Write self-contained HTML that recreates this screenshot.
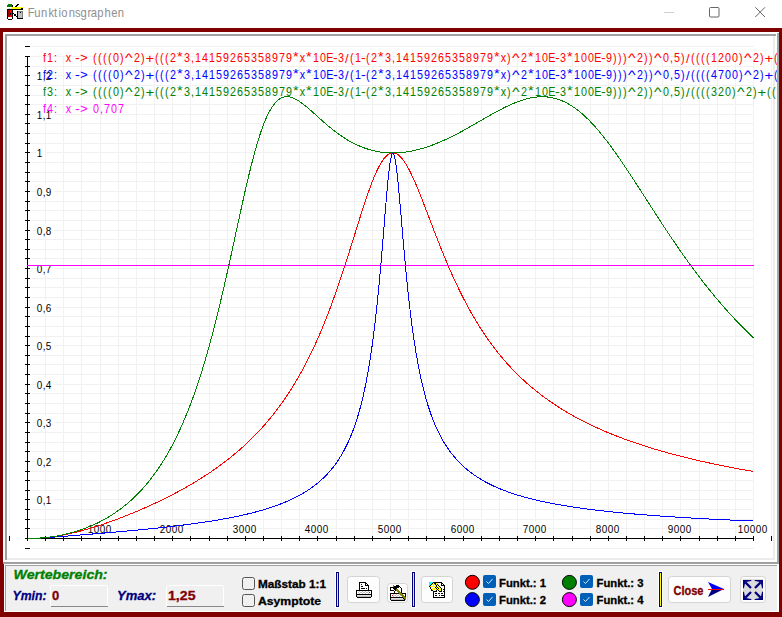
<!DOCTYPE html><html><head><meta charset="utf-8"><style>html,body{margin:0;padding:0;background:#fff;width:782px;height:617px;overflow:hidden}svg{display:block}text{font-family:"Liberation Sans",sans-serif}</style></head><body><svg width="782" height="617" viewBox="0 0 782 617"><rect x="0" y="0" width="782" height="28" fill="#fff"/><text x="30.85 38.19 45.64 53.99 60.04 64.94 68.19 76.41 83.43 89.41 97.20 100.75 108.19 116.19 123.64 130.97" y="16.9" font-size="12.5" fill="#8f8f8f" transform="scale(0.9,1)">Funktionsgraphen</text><g shape-rendering="crispEdges"><rect x="664" y="12" width="10" height="1" fill="#cfcfcf"/></g><rect x="709.5" y="7.5" width="9.5" height="9.5" rx="1" fill="none" stroke="#666" stroke-width="1"/><path d="M755.3 7.3 L765 17 M765 7.3 L755.3 17" stroke="#666" stroke-width="1" fill="none"/><g shape-rendering="crispEdges"><rect x="8" y="4" width="4" height="1" fill="#008000"/><rect x="17" y="4" width="2" height="1" fill="#000000"/><rect x="7" y="5" width="5" height="1" fill="#008000"/><rect x="12" y="5" width="1" height="1" fill="#000000"/><rect x="16" y="5" width="2" height="1" fill="#000000"/><rect x="7" y="6" width="5" height="1" fill="#008000"/><rect x="12" y="6" width="1" height="1" fill="#000000"/><rect x="15" y="6" width="2" height="1" fill="#000000"/><rect x="8" y="7" width="4" height="1" fill="#ffffff"/><rect x="12" y="7" width="11" height="1" fill="#ffff00"/><rect x="8" y="8" width="4" height="1" fill="#e0e0e0"/><rect x="12" y="8" width="9" height="1" fill="#ffff00"/><rect x="21" y="8" width="2" height="1" fill="#000000"/><rect x="7" y="9" width="16" height="1" fill="#000000"/><rect x="7" y="10" width="1" height="1" fill="#000000"/><rect x="8" y="10" width="2" height="1" fill="#a00000"/><rect x="10" y="10" width="2" height="1" fill="#ff0000"/><rect x="12" y="10" width="1" height="1" fill="#000000"/><rect x="7" y="11" width="1" height="1" fill="#000000"/><rect x="8" y="11" width="2" height="1" fill="#a00000"/><rect x="10" y="11" width="2" height="1" fill="#ff0000"/><rect x="12" y="11" width="1" height="1" fill="#000000"/><rect x="17" y="11" width="1" height="1" fill="#000000"/><rect x="18" y="11" width="5" height="1" fill="#808080"/><rect x="7" y="12" width="1" height="1" fill="#000000"/><rect x="8" y="12" width="2" height="1" fill="#a00000"/><rect x="10" y="12" width="2" height="1" fill="#ff0000"/><rect x="12" y="12" width="1" height="1" fill="#000000"/><rect x="17" y="12" width="1" height="1" fill="#000000"/><rect x="18" y="12" width="1" height="1" fill="#c0c0c0"/><rect x="19" y="12" width="1" height="1" fill="#00ffff"/><rect x="20" y="12" width="1" height="1" fill="#000000"/><rect x="21" y="12" width="1" height="1" fill="#00ffff"/><rect x="22" y="12" width="1" height="1" fill="#808080"/><rect x="7" y="13" width="1" height="1" fill="#000000"/><rect x="8" y="13" width="2" height="1" fill="#a00000"/><rect x="10" y="13" width="1" height="1" fill="#000000"/><rect x="11" y="13" width="1" height="1" fill="#ff0000"/><rect x="12" y="13" width="2" height="1" fill="#000000"/><rect x="17" y="13" width="1" height="1" fill="#000000"/><rect x="18" y="13" width="4" height="1" fill="#c0c0c0"/><rect x="22" y="13" width="1" height="1" fill="#808080"/><rect x="7" y="14" width="1" height="1" fill="#000000"/><rect x="8" y="14" width="2" height="1" fill="#a00000"/><rect x="10" y="14" width="1" height="1" fill="#000000"/><rect x="11" y="14" width="1" height="1" fill="#ff0000"/><rect x="12" y="14" width="1" height="1" fill="#000000"/><rect x="14" y="14" width="2" height="1" fill="#000000"/><rect x="17" y="14" width="1" height="1" fill="#000000"/><rect x="18" y="14" width="4" height="1" fill="#c0c0c0"/><rect x="22" y="14" width="1" height="1" fill="#808080"/><rect x="7" y="15" width="1" height="1" fill="#000000"/><rect x="8" y="15" width="2" height="1" fill="#a00000"/><rect x="10" y="15" width="2" height="1" fill="#ff0000"/><rect x="12" y="15" width="1" height="1" fill="#000000"/><rect x="14" y="15" width="2" height="1" fill="#000000"/><rect x="17" y="15" width="1" height="1" fill="#000000"/><rect x="18" y="15" width="4" height="1" fill="#c0c0c0"/><rect x="22" y="15" width="1" height="1" fill="#808080"/><rect x="7" y="16" width="1" height="1" fill="#000000"/><rect x="8" y="16" width="2" height="1" fill="#a00000"/><rect x="10" y="16" width="2" height="1" fill="#ff0000"/><rect x="12" y="16" width="1" height="1" fill="#000000"/><rect x="16" y="16" width="2" height="1" fill="#000000"/><rect x="18" y="16" width="4" height="1" fill="#c0c0c0"/><rect x="22" y="16" width="1" height="1" fill="#808080"/><rect x="7" y="17" width="1" height="1" fill="#000000"/><rect x="8" y="17" width="4" height="1" fill="#ffffff"/><rect x="12" y="17" width="1" height="1" fill="#000000"/><rect x="17" y="17" width="1" height="1" fill="#000000"/><rect x="18" y="17" width="4" height="1" fill="#c0c0c0"/><rect x="22" y="17" width="1" height="1" fill="#808080"/><rect x="7" y="18" width="1" height="1" fill="#000000"/><rect x="8" y="18" width="4" height="1" fill="#ffffff"/><rect x="12" y="18" width="1" height="1" fill="#000000"/><rect x="17" y="18" width="6" height="1" fill="#000000"/><rect x="8" y="19" width="4" height="1" fill="#000000"/></g><g shape-rendering="crispEdges"><rect x="0" y="28" width="782" height="589" fill="#800000"/><rect x="3" y="32" width="776" height="532" fill="#fff"/><rect x="5" y="34" width="771" height="2" fill="#a0a0a0"/><rect x="5" y="34" width="2" height="526" fill="#a0a0a0"/><rect x="777" y="33" width="2" height="531" fill="#a0a8a8"/><rect x="3" y="562" width="776" height="2" fill="#a0a0a0"/><rect x="773" y="36" width="2" height="524" fill="#ececec"/><rect x="7" y="558" width="768" height="2" fill="#ececec"/><rect x="4" y="564" width="775" height="48" fill="#fff"/><rect x="5" y="565" width="772" height="1" fill="#a0a0a0"/><rect x="5" y="565" width="1" height="46" fill="#a0a0a0"/><rect x="6" y="566" width="771" height="45" fill="#f0f0f0"/></g><g shape-rendering="crispEdges"><rect x="9" y="56" width="1" height="482" fill="#f1f1f1"/><rect x="27" y="56" width="1" height="482" fill="#f1f1f1"/><rect x="45" y="56" width="1" height="482" fill="#f1f1f1"/><rect x="63" y="56" width="1" height="482" fill="#f1f1f1"/><rect x="81" y="56" width="1" height="482" fill="#f1f1f1"/><rect x="100" y="56" width="1" height="482" fill="#f1f1f1"/><rect x="118" y="56" width="1" height="482" fill="#f1f1f1"/><rect x="136" y="56" width="1" height="482" fill="#f1f1f1"/><rect x="154" y="56" width="1" height="482" fill="#f1f1f1"/><rect x="172" y="56" width="1" height="482" fill="#f1f1f1"/><rect x="190" y="56" width="1" height="482" fill="#f1f1f1"/><rect x="209" y="56" width="1" height="482" fill="#f1f1f1"/><rect x="227" y="56" width="1" height="482" fill="#f1f1f1"/><rect x="245" y="56" width="1" height="482" fill="#f1f1f1"/><rect x="263" y="56" width="1" height="482" fill="#f1f1f1"/><rect x="281" y="56" width="1" height="482" fill="#f1f1f1"/><rect x="299" y="56" width="1" height="482" fill="#f1f1f1"/><rect x="317" y="56" width="1" height="482" fill="#f1f1f1"/><rect x="336" y="56" width="1" height="482" fill="#f1f1f1"/><rect x="354" y="56" width="1" height="482" fill="#f1f1f1"/><rect x="372" y="56" width="1" height="482" fill="#f1f1f1"/><rect x="390" y="56" width="1" height="482" fill="#f1f1f1"/><rect x="408" y="56" width="1" height="482" fill="#f1f1f1"/><rect x="426" y="56" width="1" height="482" fill="#f1f1f1"/><rect x="444" y="56" width="1" height="482" fill="#f1f1f1"/><rect x="463" y="56" width="1" height="482" fill="#f1f1f1"/><rect x="481" y="56" width="1" height="482" fill="#f1f1f1"/><rect x="499" y="56" width="1" height="482" fill="#f1f1f1"/><rect x="517" y="56" width="1" height="482" fill="#f1f1f1"/><rect x="535" y="56" width="1" height="482" fill="#f1f1f1"/><rect x="553" y="56" width="1" height="482" fill="#f1f1f1"/><rect x="572" y="56" width="1" height="482" fill="#f1f1f1"/><rect x="590" y="56" width="1" height="482" fill="#f1f1f1"/><rect x="608" y="56" width="1" height="482" fill="#f1f1f1"/><rect x="626" y="56" width="1" height="482" fill="#f1f1f1"/><rect x="644" y="56" width="1" height="482" fill="#f1f1f1"/><rect x="662" y="56" width="1" height="482" fill="#f1f1f1"/><rect x="680" y="56" width="1" height="482" fill="#f1f1f1"/><rect x="699" y="56" width="1" height="482" fill="#f1f1f1"/><rect x="717" y="56" width="1" height="482" fill="#f1f1f1"/><rect x="735" y="56" width="1" height="482" fill="#f1f1f1"/><rect x="753" y="56" width="1" height="482" fill="#f1f1f1"/><rect x="771" y="56" width="1" height="482" fill="#f1f1f1"/><rect x="31" y="548" width="723" height="1" fill="#f1f1f1"/><rect x="31" y="538" width="723" height="1" fill="#f1f1f1"/><rect x="31" y="528" width="723" height="1" fill="#f1f1f1"/><rect x="31" y="519" width="723" height="1" fill="#f1f1f1"/><rect x="31" y="509" width="723" height="1" fill="#f1f1f1"/><rect x="31" y="499" width="723" height="1" fill="#f1f1f1"/><rect x="31" y="490" width="723" height="1" fill="#f1f1f1"/><rect x="31" y="480" width="723" height="1" fill="#f1f1f1"/><rect x="31" y="471" width="723" height="1" fill="#f1f1f1"/><rect x="31" y="461" width="723" height="1" fill="#f1f1f1"/><rect x="31" y="451" width="723" height="1" fill="#f1f1f1"/><rect x="31" y="442" width="723" height="1" fill="#f1f1f1"/><rect x="31" y="432" width="723" height="1" fill="#f1f1f1"/><rect x="31" y="422" width="723" height="1" fill="#f1f1f1"/><rect x="31" y="413" width="723" height="1" fill="#f1f1f1"/><rect x="31" y="403" width="723" height="1" fill="#f1f1f1"/><rect x="31" y="393" width="723" height="1" fill="#f1f1f1"/><rect x="31" y="384" width="723" height="1" fill="#f1f1f1"/><rect x="31" y="374" width="723" height="1" fill="#f1f1f1"/><rect x="31" y="364" width="723" height="1" fill="#f1f1f1"/><rect x="31" y="355" width="723" height="1" fill="#f1f1f1"/><rect x="31" y="345" width="723" height="1" fill="#f1f1f1"/><rect x="31" y="336" width="723" height="1" fill="#f1f1f1"/><rect x="31" y="326" width="723" height="1" fill="#f1f1f1"/><rect x="31" y="316" width="723" height="1" fill="#f1f1f1"/><rect x="31" y="307" width="723" height="1" fill="#f1f1f1"/><rect x="31" y="297" width="723" height="1" fill="#f1f1f1"/><rect x="31" y="287" width="723" height="1" fill="#f1f1f1"/><rect x="31" y="278" width="723" height="1" fill="#f1f1f1"/><rect x="31" y="268" width="723" height="1" fill="#f1f1f1"/><rect x="31" y="258" width="723" height="1" fill="#f1f1f1"/><rect x="31" y="249" width="723" height="1" fill="#f1f1f1"/><rect x="31" y="239" width="723" height="1" fill="#f1f1f1"/><rect x="31" y="230" width="723" height="1" fill="#f1f1f1"/><rect x="31" y="220" width="723" height="1" fill="#f1f1f1"/><rect x="31" y="210" width="723" height="1" fill="#f1f1f1"/><rect x="31" y="201" width="723" height="1" fill="#f1f1f1"/><rect x="31" y="191" width="723" height="1" fill="#f1f1f1"/><rect x="31" y="181" width="723" height="1" fill="#f1f1f1"/><rect x="31" y="172" width="723" height="1" fill="#f1f1f1"/><rect x="31" y="162" width="723" height="1" fill="#f1f1f1"/><rect x="31" y="152" width="723" height="1" fill="#f1f1f1"/><rect x="31" y="143" width="723" height="1" fill="#f1f1f1"/><rect x="31" y="133" width="723" height="1" fill="#f1f1f1"/><rect x="31" y="123" width="723" height="1" fill="#f1f1f1"/><rect x="31" y="114" width="723" height="1" fill="#f1f1f1"/><rect x="31" y="104" width="723" height="1" fill="#f1f1f1"/><rect x="31" y="95" width="723" height="1" fill="#f1f1f1"/><rect x="31" y="85" width="723" height="1" fill="#f1f1f1"/><rect x="31" y="75" width="723" height="1" fill="#f1f1f1"/><rect x="31" y="66" width="723" height="1" fill="#f1f1f1"/><rect x="31" y="56" width="723" height="1" fill="#f1f1f1"/><rect x="31" y="46" width="723" height="1" fill="#f1f1f1"/><rect x="27" y="56" width="1" height="483" fill="#000"/><rect x="27" y="538" width="727" height="1" fill="#000"/><rect x="25" y="548" width="5" height="1" fill="#000"/><rect x="25" y="538" width="5" height="1" fill="#000"/><rect x="25" y="528" width="5" height="1" fill="#000"/><rect x="25" y="519" width="5" height="1" fill="#000"/><rect x="25" y="509" width="5" height="1" fill="#000"/><rect x="25" y="499" width="5" height="1" fill="#000"/><rect x="25" y="490" width="5" height="1" fill="#000"/><rect x="25" y="480" width="5" height="1" fill="#000"/><rect x="25" y="471" width="5" height="1" fill="#000"/><rect x="25" y="461" width="5" height="1" fill="#000"/><rect x="25" y="451" width="5" height="1" fill="#000"/><rect x="25" y="442" width="5" height="1" fill="#000"/><rect x="25" y="432" width="5" height="1" fill="#000"/><rect x="25" y="422" width="5" height="1" fill="#000"/><rect x="25" y="413" width="5" height="1" fill="#000"/><rect x="25" y="403" width="5" height="1" fill="#000"/><rect x="25" y="393" width="5" height="1" fill="#000"/><rect x="25" y="384" width="5" height="1" fill="#000"/><rect x="25" y="374" width="5" height="1" fill="#000"/><rect x="25" y="364" width="5" height="1" fill="#000"/><rect x="25" y="355" width="5" height="1" fill="#000"/><rect x="25" y="345" width="5" height="1" fill="#000"/><rect x="25" y="336" width="5" height="1" fill="#000"/><rect x="25" y="326" width="5" height="1" fill="#000"/><rect x="25" y="316" width="5" height="1" fill="#000"/><rect x="25" y="307" width="5" height="1" fill="#000"/><rect x="25" y="297" width="5" height="1" fill="#000"/><rect x="25" y="287" width="5" height="1" fill="#000"/><rect x="25" y="278" width="5" height="1" fill="#000"/><rect x="25" y="268" width="5" height="1" fill="#000"/><rect x="25" y="258" width="5" height="1" fill="#000"/><rect x="25" y="249" width="5" height="1" fill="#000"/><rect x="25" y="239" width="5" height="1" fill="#000"/><rect x="25" y="230" width="5" height="1" fill="#000"/><rect x="25" y="220" width="5" height="1" fill="#000"/><rect x="25" y="210" width="5" height="1" fill="#000"/><rect x="25" y="201" width="5" height="1" fill="#000"/><rect x="25" y="191" width="5" height="1" fill="#000"/><rect x="25" y="181" width="5" height="1" fill="#000"/><rect x="25" y="172" width="5" height="1" fill="#000"/><rect x="25" y="162" width="5" height="1" fill="#000"/><rect x="25" y="152" width="5" height="1" fill="#000"/><rect x="25" y="143" width="5" height="1" fill="#000"/><rect x="25" y="133" width="5" height="1" fill="#000"/><rect x="25" y="123" width="5" height="1" fill="#000"/><rect x="25" y="114" width="5" height="1" fill="#000"/><rect x="25" y="104" width="5" height="1" fill="#000"/><rect x="25" y="95" width="5" height="1" fill="#000"/><rect x="25" y="85" width="5" height="1" fill="#000"/><rect x="25" y="75" width="5" height="1" fill="#000"/><rect x="25" y="66" width="5" height="1" fill="#000"/><rect x="25" y="56" width="5" height="1" fill="#000"/><rect x="25" y="46" width="5" height="1" fill="#000"/><rect x="9" y="536" width="1" height="5" fill="#000"/><rect x="27" y="536" width="1" height="5" fill="#000"/><rect x="45" y="536" width="1" height="5" fill="#000"/><rect x="63" y="536" width="1" height="5" fill="#000"/><rect x="81" y="536" width="1" height="5" fill="#000"/><rect x="100" y="536" width="1" height="5" fill="#000"/><rect x="118" y="536" width="1" height="5" fill="#000"/><rect x="136" y="536" width="1" height="5" fill="#000"/><rect x="154" y="536" width="1" height="5" fill="#000"/><rect x="172" y="536" width="1" height="5" fill="#000"/><rect x="190" y="536" width="1" height="5" fill="#000"/><rect x="209" y="536" width="1" height="5" fill="#000"/><rect x="227" y="536" width="1" height="5" fill="#000"/><rect x="245" y="536" width="1" height="5" fill="#000"/><rect x="263" y="536" width="1" height="5" fill="#000"/><rect x="281" y="536" width="1" height="5" fill="#000"/><rect x="299" y="536" width="1" height="5" fill="#000"/><rect x="317" y="536" width="1" height="5" fill="#000"/><rect x="336" y="536" width="1" height="5" fill="#000"/><rect x="354" y="536" width="1" height="5" fill="#000"/><rect x="372" y="536" width="1" height="5" fill="#000"/><rect x="390" y="536" width="1" height="5" fill="#000"/><rect x="408" y="536" width="1" height="5" fill="#000"/><rect x="426" y="536" width="1" height="5" fill="#000"/><rect x="444" y="536" width="1" height="5" fill="#000"/><rect x="463" y="536" width="1" height="5" fill="#000"/><rect x="481" y="536" width="1" height="5" fill="#000"/><rect x="499" y="536" width="1" height="5" fill="#000"/><rect x="517" y="536" width="1" height="5" fill="#000"/><rect x="535" y="536" width="1" height="5" fill="#000"/><rect x="553" y="536" width="1" height="5" fill="#000"/><rect x="572" y="536" width="1" height="5" fill="#000"/><rect x="590" y="536" width="1" height="5" fill="#000"/><rect x="608" y="536" width="1" height="5" fill="#000"/><rect x="626" y="536" width="1" height="5" fill="#000"/><rect x="644" y="536" width="1" height="5" fill="#000"/><rect x="662" y="536" width="1" height="5" fill="#000"/><rect x="680" y="536" width="1" height="5" fill="#000"/><rect x="699" y="536" width="1" height="5" fill="#000"/><rect x="717" y="536" width="1" height="5" fill="#000"/><rect x="735" y="536" width="1" height="5" fill="#000"/><rect x="753" y="536" width="1" height="5" fill="#000"/><rect x="771" y="536" width="1" height="5" fill="#000"/></g><rect x="36" y="493" width="18" height="13" fill="#fff"/><text x="41.86 48.54 52.09" y="504.0" font-size="11.3" fill="#000" transform="scale(0.88,1)" >0,1</text><rect x="36" y="455" width="18" height="13" fill="#fff"/><text x="41.86 48.54 52.09" y="466.0" font-size="11.3" fill="#000" transform="scale(0.88,1)" >0,2</text><rect x="36" y="416" width="18" height="13" fill="#fff"/><text x="41.86 48.54 52.09" y="427.0" font-size="11.3" fill="#000" transform="scale(0.88,1)" >0,3</text><rect x="36" y="378" width="18" height="13" fill="#fff"/><text x="41.86 48.54 52.09" y="389.0" font-size="11.3" fill="#000" transform="scale(0.88,1)" >0,4</text><rect x="36" y="339" width="18" height="13" fill="#fff"/><text x="41.86 48.54 52.09" y="350.0" font-size="11.3" fill="#000" transform="scale(0.88,1)" >0,5</text><rect x="36" y="301" width="18" height="13" fill="#fff"/><text x="41.86 48.54 52.09" y="312.0" font-size="11.3" fill="#000" transform="scale(0.88,1)" >0,6</text><rect x="36" y="262" width="18" height="13" fill="#fff"/><text x="41.86 48.54 52.09" y="273.0" font-size="11.3" fill="#000" transform="scale(0.88,1)" >0,7</text><rect x="36" y="224" width="18" height="13" fill="#fff"/><text x="41.86 48.54 52.09" y="235.0" font-size="11.3" fill="#000" transform="scale(0.88,1)" >0,8</text><rect x="36" y="185" width="18" height="13" fill="#fff"/><text x="41.86 48.54 52.09" y="196.0" font-size="11.3" fill="#000" transform="scale(0.88,1)" >0,9</text><rect x="36" y="146" width="9" height="13" fill="#fff"/><text x="41.86" y="157.0" font-size="11.3" fill="#000" transform="scale(0.88,1)" >1</text><rect x="36" y="108" width="18" height="13" fill="#fff"/><text x="41.86 48.54 52.09" y="119.0" font-size="11.3" fill="#000" transform="scale(0.88,1)" >1,1</text><rect x="36" y="69" width="18" height="13" fill="#fff"/><text x="41.86 48.54 52.09" y="80.0" font-size="11.3" fill="#000" transform="scale(0.88,1)" >1,2</text><rect x="87" y="522" width="26" height="13" fill="#fff"/><text x="99.70 106.52 113.34 120.15" y="533.0" font-size="11.3" fill="#000" transform="scale(0.88,1)" >1000</text><rect x="159" y="522" width="26" height="13" fill="#fff"/><text x="181.52 188.34 195.15 201.97" y="533.0" font-size="11.3" fill="#000" transform="scale(0.88,1)" >2000</text><rect x="232" y="522" width="26" height="13" fill="#fff"/><text x="264.47 271.29 278.11 284.93" y="533.0" font-size="11.3" fill="#000" transform="scale(0.88,1)" >3000</text><rect x="304" y="522" width="26" height="13" fill="#fff"/><text x="346.29 353.11 359.93 366.74" y="533.0" font-size="11.3" fill="#000" transform="scale(0.88,1)" >4000</text><rect x="377" y="522" width="26" height="13" fill="#fff"/><text x="429.24 436.06 442.88 449.70" y="533.0" font-size="11.3" fill="#000" transform="scale(0.88,1)" >5000</text><rect x="450" y="522" width="26" height="13" fill="#fff"/><text x="512.20 519.02 525.84 532.65" y="533.0" font-size="11.3" fill="#000" transform="scale(0.88,1)" >6000</text><rect x="522" y="522" width="26" height="13" fill="#fff"/><text x="594.02 600.84 607.65 614.47" y="533.0" font-size="11.3" fill="#000" transform="scale(0.88,1)" >7000</text><rect x="595" y="522" width="26" height="13" fill="#fff"/><text x="676.97 683.79 690.61 697.43" y="533.0" font-size="11.3" fill="#000" transform="scale(0.88,1)" >8000</text><rect x="667" y="522" width="26" height="13" fill="#fff"/><text x="758.79 765.61 772.43 779.24" y="533.0" font-size="11.3" fill="#000" transform="scale(0.88,1)" >9000</text><rect x="737" y="522" width="32" height="13" fill="#fff"/><text x="838.34 845.15 851.97 858.79 865.61" y="533.0" font-size="11.3" fill="#000" transform="scale(0.88,1)" >10000</text><defs><clipPath id="cp"><rect x="7" y="36" width="770" height="526"/></clipPath></defs><g clip-path="url(#cp)"><text x="49.89 54.55 62.68 76.41 108.27 114.08 119.90 125.71 131.29 139.66 155.71 164.08 180.36 186.17 191.99 197.57 213.85 221.98 226.64 234.78 242.92 251.06 259.20 267.34 275.48 283.62 291.76 299.90 308.04 316.18 324.32 332.45 348.50 363.85 371.99 379.44 392.92 407.10 412.69 425.71 431.29 447.57 455.71 460.36 468.50 476.64 484.78 492.92 501.06 509.20 517.34 525.48 533.62 541.76 549.90 558.04 566.18 582.22 589.66 605.71 621.99 630.13 637.58 651.06 667.34 675.48 683.62 691.06 704.55 712.92 718.73 724.55 740.59 748.97 754.78 770.83 778.96 783.62 791.99 803.62 809.43 815.24 821.06 826.64 834.78 842.92 851.06 859.43 875.48 883.85 900.13 905.94 911.76 917.57 923.15 939.43" y="62.0" font-size="12.5" fill="#ff0000" transform="scale(0.86,1)" >f1:x((((0)2)(((23,14159265358979x10E3(1(23,14159265358979x)210E3100E9)))2))0,5)((((1200)2)((((23</text><text x="65.22 289.57 313.92 482.61 522.61" y="62.0" font-size="12.5" fill="#ff0000" transform="scale(1.15,1)" >-----</text><text x="76.25" y="62.0" font-size="12.5" fill="#ff0000" transform="scale(1.05,1)" >&gt;</text><text x="96.22 393.91 483.14 503.14 572.38" y="62.0" font-size="12.5" fill="#ff0000" transform="scale(1.3,1)" >^^^^^</text><text x="126.55 664.81" y="63.0" font-size="13.0" fill="#ff0000" transform="scale(1.15,1)" >++</text><text x="147.58 244.25 255.08 315.08 411.75 440.08 472.58 667.58" y="61.1" font-size="12.0" fill="#ff0000" transform="scale(1.2,1)" >********</text><text x="363.28 722.23" y="62.8" font-size="13.5" fill="#ff0000" transform="scale(0.95,1)" >//</text><text x="49.89 54.55 62.68 76.41 108.27 114.08 119.90 125.71 131.29 139.66 155.71 164.08 180.36 186.17 191.99 197.57 213.85 221.98 226.64 234.78 242.92 251.06 259.20 267.34 275.48 283.62 291.76 299.90 308.04 316.18 324.32 332.45 348.50 363.85 371.99 379.44 392.92 407.10 412.69 425.71 431.29 447.57 455.71 460.36 468.50 476.64 484.78 492.92 501.06 509.20 517.34 525.48 533.62 541.76 549.90 558.04 566.18 582.22 589.66 605.71 621.99 630.13 637.58 651.06 667.34 675.48 683.62 691.06 704.55 712.92 718.73 724.55 740.59 748.97 754.78 770.83 778.96 783.62 791.99 803.62 809.43 815.24 821.06 826.64 834.78 842.92 851.06 859.43 875.48 883.85 900.13 905.94 911.76 917.57 923.15 939.43" y="79.0" font-size="12.5" fill="#0000ff" transform="scale(0.86,1)" >f2:x((((0)2)(((23,14159265358979x10E3(1(23,14159265358979x)210E3100E9)))2))0,5)((((4700)2)((((23</text><text x="65.22 289.57 313.92 482.61 522.61" y="79.0" font-size="12.5" fill="#0000ff" transform="scale(1.15,1)" >-----</text><text x="76.25" y="79.0" font-size="12.5" fill="#0000ff" transform="scale(1.05,1)" >&gt;</text><text x="96.22 393.91 483.14 503.14 572.38" y="79.0" font-size="12.5" fill="#0000ff" transform="scale(1.3,1)" >^^^^^</text><text x="126.55 664.81" y="80.0" font-size="13.0" fill="#0000ff" transform="scale(1.15,1)" >++</text><text x="147.58 244.25 255.08 315.08 411.75 440.08 472.58 667.58" y="78.1" font-size="12.0" fill="#0000ff" transform="scale(1.2,1)" >********</text><text x="363.28 722.23" y="79.8" font-size="13.5" fill="#0000ff" transform="scale(0.95,1)" >//</text><text x="49.89 54.55 62.68 76.41 108.27 114.08 119.90 125.71 131.29 139.66 155.71 164.08 180.36 186.17 191.99 197.57 213.85 221.98 226.64 234.78 242.92 251.06 259.20 267.34 275.48 283.62 291.76 299.90 308.04 316.18 324.32 332.45 348.50 363.85 371.99 379.44 392.92 407.10 412.69 425.71 431.29 447.57 455.71 460.36 468.50 476.64 484.78 492.92 501.06 509.20 517.34 525.48 533.62 541.76 549.90 558.04 566.18 582.22 589.66 605.71 621.99 630.13 637.58 651.06 667.34 675.48 683.62 691.06 704.55 712.92 718.73 724.55 740.59 748.97 754.78 770.83 778.96 783.62 791.99 803.62 809.43 815.24 821.06 826.64 834.78 842.92 851.29 867.34 875.71 891.99 897.80 903.62 909.43 915.01 931.29" y="96.0" font-size="12.5" fill="#008000" transform="scale(0.86,1)" >f3:x((((0)2)(((23,14159265358979x10E3(1(23,14159265358979x)210E3100E9)))2))0,5)((((320)2)((((23</text><text x="65.22 289.57 313.92 482.61 522.61" y="96.0" font-size="12.5" fill="#008000" transform="scale(1.15,1)" >-----</text><text x="76.25" y="96.0" font-size="12.5" fill="#008000" transform="scale(1.05,1)" >&gt;</text><text x="96.22 393.91 483.14 503.14 566.99" y="96.0" font-size="12.5" fill="#008000" transform="scale(1.3,1)" >^^^^^</text><text x="126.55 658.73" y="97.0" font-size="13.0" fill="#008000" transform="scale(1.15,1)" >++</text><text x="147.58 244.25 255.08 315.08 411.75 440.08 472.58 661.75" y="95.1" font-size="12.0" fill="#008000" transform="scale(1.2,1)" >********</text><text x="363.28 722.23" y="96.8" font-size="13.5" fill="#008000" transform="scale(0.95,1)" >//</text><text x="49.89 54.55 62.68 76.41 108.04 116.17 120.83 128.97 137.11" y="113.0" font-size="12.5" fill="#ff00ff" transform="scale(0.86,1)" >f4:x0,707</text><text x="65.22" y="113.0" font-size="12.5" fill="#ff00ff" transform="scale(1.15,1)" >-</text><text x="76.25" y="113.0" font-size="12.5" fill="#ff00ff" transform="scale(1.05,1)" >&gt;</text></g><polyline points="27.5,538.50 28.5,538.50 29.5,538.49 30.5,538.47 31.5,538.45 32.5,538.43 33.5,538.40 34.5,538.36 35.5,538.32 36.5,538.27 37.5,538.21 38.5,538.15 39.5,538.09 40.5,538.01 41.5,537.94 42.5,537.85 43.5,537.77 44.5,537.67 45.5,537.57 46.5,537.47 47.5,537.36 48.5,537.24 49.5,537.12 50.5,537.00 51.5,536.87 52.5,536.73 53.5,536.59 54.5,536.44 55.5,536.29 56.5,536.13 57.5,535.97 58.5,535.80 59.5,535.63 60.5,535.46 61.5,535.27 62.5,535.09 63.5,534.90 64.5,534.70 65.5,534.50 66.5,534.30 67.5,534.09 68.5,533.88 69.5,533.66 70.5,533.44 71.5,533.21 72.5,532.98 73.5,532.75 74.5,532.51 75.5,532.27 76.5,532.02 77.5,531.77 78.5,531.52 79.5,531.26 80.5,531.00 81.5,530.73 82.5,530.46 83.5,530.19 84.5,529.91 85.5,529.63 86.5,529.35 87.5,529.06 88.5,528.77 89.5,528.48 90.5,528.18 91.5,527.88 92.5,527.58 93.5,527.27 94.5,526.96 95.5,526.65 96.5,526.33 97.5,526.01 98.5,525.69 99.5,525.37 100.5,525.04 101.5,524.71 102.5,524.38 103.5,524.04 104.5,523.70 105.5,523.36 106.5,523.01 107.5,522.67 108.5,522.32 109.5,521.96 110.5,521.61 111.5,521.25 112.5,520.89 113.5,520.52 114.5,520.16 115.5,519.79 116.5,519.42 117.5,519.05 118.5,518.67 119.5,518.29 120.5,517.91 121.5,517.53 122.5,517.14 123.5,516.75 124.5,516.36 125.5,515.97 126.5,515.57 127.5,515.17 128.5,514.77 129.5,514.37 130.5,513.96 131.5,513.55 132.5,513.14 133.5,512.73 134.5,512.32 135.5,511.90 136.5,511.48 137.5,511.06 138.5,510.63 139.5,510.20 140.5,509.77 141.5,509.34 142.5,508.90 143.5,508.47 144.5,508.03 145.5,507.58 146.5,507.14 147.5,506.69 148.5,506.24 149.5,505.79 150.5,505.33 151.5,504.88 152.5,504.42 153.5,503.95 154.5,503.49 155.5,503.02 156.5,502.55 157.5,502.07 158.5,501.60 159.5,501.12 160.5,500.63 161.5,500.15 162.5,499.66 163.5,499.17 164.5,498.68 165.5,498.18 166.5,497.68 167.5,497.18 168.5,496.67 169.5,496.16 170.5,495.65 171.5,495.14 172.5,494.62 173.5,494.10 174.5,493.57 175.5,493.04 176.5,492.51 177.5,491.98 178.5,491.44 179.5,490.90 180.5,490.35 181.5,489.80 182.5,489.25 183.5,488.70 184.5,488.14 185.5,487.57 186.5,487.01 187.5,486.44 188.5,485.86 189.5,485.28 190.5,484.70 191.5,484.11 192.5,483.52 193.5,482.93 194.5,482.33 195.5,481.73 196.5,481.12 197.5,480.51 198.5,479.89 199.5,479.27 200.5,478.65 201.5,478.02 202.5,477.38 203.5,476.74 204.5,476.10 205.5,475.45 206.5,474.80 207.5,474.14 208.5,473.47 209.5,472.80 210.5,472.13 211.5,471.45 212.5,470.76 213.5,470.07 214.5,469.37 215.5,468.67 216.5,467.96 217.5,467.25 218.5,466.53 219.5,465.80 220.5,465.07 221.5,464.33 222.5,463.59 223.5,462.84 224.5,462.08 225.5,461.31 226.5,460.54 227.5,459.76 228.5,458.98 229.5,458.19 230.5,457.39 231.5,456.58 232.5,455.77 233.5,454.94 234.5,454.11 235.5,453.28 236.5,452.43 237.5,451.58 238.5,450.72 239.5,449.85 240.5,448.97 241.5,448.08 242.5,447.19 243.5,446.28 244.5,445.37 245.5,444.44 246.5,443.51 247.5,442.57 248.5,441.62 249.5,440.66 250.5,439.68 251.5,438.70 252.5,437.71 253.5,436.71 254.5,435.69 255.5,434.67 256.5,433.63 257.5,432.59 258.5,431.53 259.5,430.46 260.5,429.38 261.5,428.28 262.5,427.18 263.5,426.06 264.5,424.93 265.5,423.78 266.5,422.62 267.5,421.45 268.5,420.27 269.5,419.07 270.5,417.85 271.5,416.63 272.5,415.38 273.5,414.13 274.5,412.85 275.5,411.57 276.5,410.26 277.5,408.94 278.5,407.61 279.5,406.25 280.5,404.88 281.5,403.50 282.5,402.09 283.5,400.67 284.5,399.23 285.5,397.77 286.5,396.29 287.5,394.80 288.5,393.28 289.5,391.74 290.5,390.19 291.5,388.61 292.5,387.01 293.5,385.40 294.5,383.75 295.5,382.09 296.5,380.41 297.5,378.70 298.5,376.97 299.5,375.22 300.5,373.44 301.5,371.64 302.5,369.81 303.5,367.96 304.5,366.08 305.5,364.18 306.5,362.25 307.5,360.30 308.5,358.31 309.5,356.30 310.5,354.27 311.5,352.20 312.5,350.11 313.5,347.99 314.5,345.83 315.5,343.65 316.5,341.44 317.5,339.20 318.5,336.93 319.5,334.63 320.5,332.29 321.5,329.93 322.5,327.53 323.5,325.10 324.5,322.64 325.5,320.15 326.5,317.63 327.5,315.07 328.5,312.48 329.5,309.86 330.5,307.20 331.5,304.52 332.5,301.80 333.5,299.05 334.5,296.27 335.5,293.45 336.5,290.61 337.5,287.73 338.5,284.83 339.5,281.89 340.5,278.93 341.5,275.94 342.5,272.92 343.5,269.88 344.5,266.82 345.5,263.73 346.5,260.61 347.5,257.48 348.5,254.33 349.5,251.17 350.5,247.99 351.5,244.80 352.5,241.60 353.5,238.39 354.5,235.18 355.5,231.97 356.5,228.76 357.5,225.56 358.5,222.37 359.5,219.18 360.5,216.02 361.5,212.88 362.5,209.76 363.5,206.67 364.5,203.62 365.5,200.61 366.5,197.64 367.5,194.73 368.5,191.87 369.5,189.06 370.5,186.33 371.5,183.67 372.5,181.08 373.5,178.57 374.5,176.16 375.5,173.84 376.5,171.61 377.5,169.49 378.5,167.48 379.5,165.59 380.5,163.81 381.5,162.15 382.5,160.62 383.5,159.23 384.5,157.96 385.5,156.83 386.5,155.84 387.5,155.00 388.5,154.29 389.5,153.73 390.5,153.31 391.5,153.04 392.5,152.91 393.5,152.93 394.5,153.08 395.5,153.38 396.5,153.82 397.5,154.39 398.5,155.10 399.5,155.94 400.5,156.90 401.5,157.99 402.5,159.19 403.5,160.51 404.5,161.93 405.5,163.47 406.5,165.10 407.5,166.82 408.5,168.64 409.5,170.54 410.5,172.51 411.5,174.56 412.5,176.69 413.5,178.87 414.5,181.11 415.5,183.41 416.5,185.76 417.5,188.15 418.5,190.58 419.5,193.04 420.5,195.54 421.5,198.06 422.5,200.61 423.5,203.18 424.5,205.76 425.5,208.36 426.5,210.97 427.5,213.58 428.5,216.20 429.5,218.82 430.5,221.44 431.5,224.06 432.5,226.67 433.5,229.27 434.5,231.86 435.5,234.44 436.5,237.01 437.5,239.57 438.5,242.11 439.5,244.63 440.5,247.14 441.5,249.62 442.5,252.09 443.5,254.53 444.5,256.96 445.5,259.36 446.5,261.74 447.5,264.10 448.5,266.43 449.5,268.74 450.5,271.02 451.5,273.28 452.5,275.52 453.5,277.73 454.5,279.91 455.5,282.07 456.5,284.21 457.5,286.32 458.5,288.40 459.5,290.46 460.5,292.50 461.5,294.51 462.5,296.49 463.5,298.45 464.5,300.39 465.5,302.30 466.5,304.19 467.5,306.05 468.5,307.89 469.5,309.70 470.5,311.50 471.5,313.27 472.5,315.01 473.5,316.74 474.5,318.44 475.5,320.12 476.5,321.78 477.5,323.41 478.5,325.03 479.5,326.62 480.5,328.20 481.5,329.75 482.5,331.28 483.5,332.80 484.5,334.29 485.5,335.77 486.5,337.22 487.5,338.66 488.5,340.08 489.5,341.48 490.5,342.86 491.5,344.23 492.5,345.58 493.5,346.91 494.5,348.22 495.5,349.52 496.5,350.80 497.5,352.07 498.5,353.32 499.5,354.55 500.5,355.77 501.5,356.98 502.5,358.17 503.5,359.34 504.5,360.50 505.5,361.65 506.5,362.78 507.5,363.90 508.5,365.01 509.5,366.10 510.5,367.18 511.5,368.24 512.5,369.30 513.5,370.34 514.5,371.37 515.5,372.39 516.5,373.39 517.5,374.39 518.5,375.37 519.5,376.34 520.5,377.30 521.5,378.25 522.5,379.19 523.5,380.11 524.5,381.03 525.5,381.94 526.5,382.84 527.5,383.72 528.5,384.60 529.5,385.47 530.5,386.32 531.5,387.17 532.5,388.01 533.5,388.84 534.5,389.67 535.5,390.48 536.5,391.28 537.5,392.08 538.5,392.86 539.5,393.64 540.5,394.41 541.5,395.18 542.5,395.93 543.5,396.68 544.5,397.42 545.5,398.15 546.5,398.88 547.5,399.59 548.5,400.30 549.5,401.00 550.5,401.70 551.5,402.39 552.5,403.07 553.5,403.75 554.5,404.42 555.5,405.08 556.5,405.73 557.5,406.38 558.5,407.03 559.5,407.66 560.5,408.29 561.5,408.92 562.5,409.54 563.5,410.15 564.5,410.76 565.5,411.36 566.5,411.96 567.5,412.55 568.5,413.13 569.5,413.71 570.5,414.29 571.5,414.86 572.5,415.42 573.5,415.98 574.5,416.53 575.5,417.08 576.5,417.63 577.5,418.16 578.5,418.70 579.5,419.23 580.5,419.75 581.5,420.28 582.5,420.79 583.5,421.30 584.5,421.81 585.5,422.31 586.5,422.81 587.5,423.31 588.5,423.80 589.5,424.28 590.5,424.77 591.5,425.24 592.5,425.72 593.5,426.19 594.5,426.66 595.5,427.12 596.5,427.58 597.5,428.03 598.5,428.48 599.5,428.93 600.5,429.38 601.5,429.82 602.5,430.25 603.5,430.69 604.5,431.12 605.5,431.54 606.5,431.97 607.5,432.39 608.5,432.80 609.5,433.22 610.5,433.63 611.5,434.04 612.5,434.44 613.5,434.84 614.5,435.24 615.5,435.64 616.5,436.03 617.5,436.42 618.5,436.80 619.5,437.19 620.5,437.57 621.5,437.95 622.5,438.32 623.5,438.69 624.5,439.06 625.5,439.43 626.5,439.79 627.5,440.16 628.5,440.51 629.5,440.87 630.5,441.22 631.5,441.58 632.5,441.93 633.5,442.27 634.5,442.62 635.5,442.96 636.5,443.30 637.5,443.63 638.5,443.97 639.5,444.30 640.5,444.63 641.5,444.96 642.5,445.28 643.5,445.61 644.5,445.93 645.5,446.25 646.5,446.57 647.5,446.88 648.5,447.19 649.5,447.50 650.5,447.81 651.5,448.12 652.5,448.42 653.5,448.73 654.5,449.03 655.5,449.32 656.5,449.62 657.5,449.92 658.5,450.21 659.5,450.50 660.5,450.79 661.5,451.08 662.5,451.36 663.5,451.65 664.5,451.93 665.5,452.21 666.5,452.49 667.5,452.76 668.5,453.04 669.5,453.31 670.5,453.58 671.5,453.85 672.5,454.12 673.5,454.39 674.5,454.65 675.5,454.92 676.5,455.18 677.5,455.44 678.5,455.70 679.5,455.95 680.5,456.21 681.5,456.46 682.5,456.72 683.5,456.97 684.5,457.22 685.5,457.46 686.5,457.71 687.5,457.96 688.5,458.20 689.5,458.44 690.5,458.68 691.5,458.92 692.5,459.16 693.5,459.40 694.5,459.63 695.5,459.87 696.5,460.10 697.5,460.33 698.5,460.56 699.5,460.79 700.5,461.02 701.5,461.25 702.5,461.47 703.5,461.70 704.5,461.92 705.5,462.14 706.5,462.36 707.5,462.58 708.5,462.80 709.5,463.01 710.5,463.23 711.5,463.44 712.5,463.66 713.5,463.87 714.5,464.08 715.5,464.29 716.5,464.50 717.5,464.71 718.5,464.91 719.5,465.12 720.5,465.32 721.5,465.53 722.5,465.73 723.5,465.93 724.5,466.13 725.5,466.33 726.5,466.53 727.5,466.72 728.5,466.92 729.5,467.12 730.5,467.31 731.5,467.50 732.5,467.70 733.5,467.89 734.5,468.08 735.5,468.27 736.5,468.45 737.5,468.64 738.5,468.83 739.5,469.01 740.5,469.20 741.5,469.38 742.5,469.56 743.5,469.75 744.5,469.93 745.5,470.11 746.5,470.29 747.5,470.46 748.5,470.64 749.5,470.82 750.5,470.99 751.5,471.17 752.5,471.34 753.5,471.52" fill="none" stroke="#ff0000" stroke-width="1" shape-rendering="crispEdges"/><polyline points="27.5,538.50 28.5,538.50 29.5,538.49 30.5,538.47 31.5,538.45 32.5,538.43 33.5,538.40 34.5,538.36 35.5,538.32 36.5,538.28 37.5,538.23 38.5,538.18 39.5,538.13 40.5,538.07 41.5,538.01 42.5,537.94 43.5,537.88 44.5,537.81 45.5,537.74 46.5,537.67 47.5,537.60 48.5,537.52 49.5,537.45 50.5,537.38 51.5,537.30 52.5,537.22 53.5,537.15 54.5,537.07 55.5,536.99 56.5,536.91 57.5,536.83 58.5,536.75 59.5,536.67 60.5,536.59 61.5,536.51 62.5,536.44 63.5,536.36 64.5,536.28 65.5,536.20 66.5,536.12 67.5,536.03 68.5,535.95 69.5,535.87 70.5,535.79 71.5,535.71 72.5,535.63 73.5,535.55 74.5,535.47 75.5,535.39 76.5,535.31 77.5,535.23 78.5,535.15 79.5,535.07 80.5,534.99 81.5,534.91 82.5,534.82 83.5,534.74 84.5,534.66 85.5,534.58 86.5,534.50 87.5,534.42 88.5,534.34 89.5,534.25 90.5,534.17 91.5,534.09 92.5,534.01 93.5,533.92 94.5,533.84 95.5,533.76 96.5,533.68 97.5,533.59 98.5,533.51 99.5,533.43 100.5,533.34 101.5,533.26 102.5,533.17 103.5,533.09 104.5,533.01 105.5,532.92 106.5,532.84 107.5,532.75 108.5,532.66 109.5,532.58 110.5,532.49 111.5,532.41 112.5,532.32 113.5,532.23 114.5,532.15 115.5,532.06 116.5,531.97 117.5,531.88 118.5,531.79 119.5,531.71 120.5,531.62 121.5,531.53 122.5,531.44 123.5,531.35 124.5,531.26 125.5,531.17 126.5,531.08 127.5,530.98 128.5,530.89 129.5,530.80 130.5,530.71 131.5,530.62 132.5,530.52 133.5,530.43 134.5,530.33 135.5,530.24 136.5,530.14 137.5,530.05 138.5,529.95 139.5,529.86 140.5,529.76 141.5,529.66 142.5,529.56 143.5,529.47 144.5,529.37 145.5,529.27 146.5,529.17 147.5,529.07 148.5,528.97 149.5,528.86 150.5,528.76 151.5,528.66 152.5,528.56 153.5,528.45 154.5,528.35 155.5,528.24 156.5,528.14 157.5,528.03 158.5,527.92 159.5,527.82 160.5,527.71 161.5,527.60 162.5,527.49 163.5,527.38 164.5,527.27 165.5,527.16 166.5,527.04 167.5,526.93 168.5,526.82 169.5,526.70 170.5,526.59 171.5,526.47 172.5,526.35 173.5,526.24 174.5,526.12 175.5,526.00 176.5,525.88 177.5,525.76 178.5,525.64 179.5,525.51 180.5,525.39 181.5,525.27 182.5,525.14 183.5,525.01 184.5,524.89 185.5,524.76 186.5,524.63 187.5,524.50 188.5,524.37 189.5,524.23 190.5,524.10 191.5,523.97 192.5,523.83 193.5,523.69 194.5,523.56 195.5,523.42 196.5,523.28 197.5,523.14 198.5,522.99 199.5,522.85 200.5,522.70 201.5,522.56 202.5,522.41 203.5,522.26 204.5,522.11 205.5,521.96 206.5,521.81 207.5,521.65 208.5,521.50 209.5,521.34 210.5,521.18 211.5,521.02 212.5,520.86 213.5,520.70 214.5,520.53 215.5,520.37 216.5,520.20 217.5,520.03 218.5,519.86 219.5,519.69 220.5,519.51 221.5,519.33 222.5,519.16 223.5,518.98 224.5,518.79 225.5,518.61 226.5,518.42 227.5,518.24 228.5,518.05 229.5,517.85 230.5,517.66 231.5,517.46 232.5,517.27 233.5,517.06 234.5,516.86 235.5,516.66 236.5,516.45 237.5,516.24 238.5,516.03 239.5,515.81 240.5,515.59 241.5,515.37 242.5,515.15 243.5,514.93 244.5,514.70 245.5,514.47 246.5,514.23 247.5,514.00 248.5,513.76 249.5,513.51 250.5,513.27 251.5,513.02 252.5,512.77 253.5,512.51 254.5,512.25 255.5,511.99 256.5,511.72 257.5,511.45 258.5,511.18 259.5,510.90 260.5,510.62 261.5,510.33 262.5,510.05 263.5,509.75 264.5,509.45 265.5,509.15 266.5,508.85 267.5,508.53 268.5,508.22 269.5,507.90 270.5,507.57 271.5,507.24 272.5,506.91 273.5,506.56 274.5,506.22 275.5,505.87 276.5,505.51 277.5,505.14 278.5,504.78 279.5,504.40 280.5,504.02 281.5,503.63 282.5,503.23 283.5,502.83 284.5,502.42 285.5,502.01 286.5,501.58 287.5,501.15 288.5,500.71 289.5,500.27 290.5,499.81 291.5,499.35 292.5,498.87 293.5,498.39 294.5,497.90 295.5,497.40 296.5,496.89 297.5,496.37 298.5,495.84 299.5,495.29 300.5,494.74 301.5,494.18 302.5,493.60 303.5,493.01 304.5,492.41 305.5,491.79 306.5,491.17 307.5,490.52 308.5,489.87 309.5,489.20 310.5,488.51 311.5,487.80 312.5,487.08 313.5,486.35 314.5,485.59 315.5,484.82 316.5,484.03 317.5,483.21 318.5,482.38 319.5,481.52 320.5,480.65 321.5,479.74 322.5,478.82 323.5,477.87 324.5,476.89 325.5,475.89 326.5,474.86 327.5,473.79 328.5,472.70 329.5,471.57 330.5,470.42 331.5,469.22 332.5,467.99 333.5,466.72 334.5,465.41 335.5,464.05 336.5,462.65 337.5,461.21 338.5,459.71 339.5,458.17 340.5,456.57 341.5,454.91 342.5,453.19 343.5,451.41 344.5,449.56 345.5,447.64 346.5,445.65 347.5,443.58 348.5,441.42 349.5,439.17 350.5,436.84 351.5,434.40 352.5,431.85 353.5,429.20 354.5,426.42 355.5,423.51 356.5,420.47 357.5,417.29 358.5,413.95 359.5,410.44 360.5,406.76 361.5,402.89 362.5,398.81 363.5,394.52 364.5,389.99 365.5,385.21 366.5,380.16 367.5,374.82 368.5,369.17 369.5,363.19 370.5,356.85 371.5,350.13 372.5,343.00 373.5,335.44 374.5,327.42 375.5,318.92 376.5,309.91 377.5,300.39 378.5,290.34 379.5,279.76 380.5,268.69 381.5,257.16 382.5,245.24 383.5,233.05 384.5,220.74 385.5,208.53 386.5,196.68 387.5,185.53 388.5,175.43 389.5,166.78 390.5,159.97 391.5,155.33 392.5,153.09 393.5,153.37 394.5,156.12 395.5,161.18 396.5,168.25 397.5,176.98 398.5,186.98 399.5,197.87 400.5,209.31 401.5,221.01 402.5,232.72 403.5,244.28 404.5,255.54 405.5,266.41 406.5,276.83 407.5,286.78 408.5,296.23 409.5,305.19 410.5,313.67 411.5,321.68 412.5,329.23 413.5,336.37 414.5,343.10 415.5,349.45 416.5,355.45 417.5,361.12 418.5,366.48 419.5,371.55 420.5,376.35 421.5,380.89 422.5,385.21 423.5,389.30 424.5,393.20 425.5,396.90 426.5,400.42 427.5,403.78 428.5,406.98 429.5,410.03 430.5,412.95 431.5,415.74 432.5,418.41 433.5,420.96 434.5,423.41 435.5,425.76 436.5,428.02 437.5,430.18 438.5,432.26 439.5,434.26 440.5,436.19 441.5,438.05 442.5,439.83 443.5,441.56 444.5,443.22 445.5,444.83 446.5,446.38 447.5,447.88 448.5,449.32 449.5,450.73 450.5,452.08 451.5,453.40 452.5,454.67 453.5,455.91 454.5,457.10 455.5,458.26 456.5,459.39 457.5,460.48 458.5,461.55 459.5,462.58 460.5,463.59 461.5,464.56 462.5,465.51 463.5,466.44 464.5,467.34 465.5,468.22 466.5,469.07 467.5,469.90 468.5,470.72 469.5,471.51 470.5,472.28 471.5,473.03 472.5,473.77 473.5,474.49 474.5,475.19 475.5,475.88 476.5,476.54 477.5,477.20 478.5,477.84 479.5,478.47 480.5,479.08 481.5,479.68 482.5,480.26 483.5,480.84 484.5,481.40 485.5,481.95 486.5,482.49 487.5,483.02 488.5,483.53 489.5,484.04 490.5,484.54 491.5,485.02 492.5,485.50 493.5,485.97 494.5,486.43 495.5,486.88 496.5,487.32 497.5,487.76 498.5,488.19 499.5,488.61 500.5,489.02 501.5,489.42 502.5,489.82 503.5,490.21 504.5,490.59 505.5,490.97 506.5,491.34 507.5,491.70 508.5,492.06 509.5,492.41 510.5,492.76 511.5,493.10 512.5,493.44 513.5,493.77 514.5,494.09 515.5,494.41 516.5,494.73 517.5,495.04 518.5,495.34 519.5,495.64 520.5,495.94 521.5,496.23 522.5,496.52 523.5,496.80 524.5,497.08 525.5,497.35 526.5,497.62 527.5,497.89 528.5,498.15 529.5,498.41 530.5,498.67 531.5,498.92 532.5,499.17 533.5,499.41 534.5,499.66 535.5,499.90 536.5,500.13 537.5,500.36 538.5,500.59 539.5,500.82 540.5,501.04 541.5,501.26 542.5,501.48 543.5,501.69 544.5,501.91 545.5,502.12 546.5,502.32 547.5,502.53 548.5,502.73 549.5,502.93 550.5,503.12 551.5,503.32 552.5,503.51 553.5,503.70 554.5,503.89 555.5,504.07 556.5,504.25 557.5,504.44 558.5,504.61 559.5,504.79 560.5,504.97 561.5,505.14 562.5,505.31 563.5,505.48 564.5,505.64 565.5,505.81 566.5,505.97 567.5,506.13 568.5,506.29 569.5,506.45 570.5,506.61 571.5,506.76 572.5,506.92 573.5,507.07 574.5,507.22 575.5,507.36 576.5,507.51 577.5,507.66 578.5,507.80 579.5,507.94 580.5,508.08 581.5,508.22 582.5,508.36 583.5,508.49 584.5,508.63 585.5,508.76 586.5,508.90 587.5,509.03 588.5,509.16 589.5,509.28 590.5,509.41 591.5,509.54 592.5,509.66 593.5,509.79 594.5,509.91 595.5,510.03 596.5,510.15 597.5,510.27 598.5,510.39 599.5,510.50 600.5,510.62 601.5,510.73 602.5,510.85 603.5,510.96 604.5,511.07 605.5,511.18 606.5,511.29 607.5,511.40 608.5,511.51 609.5,511.62 610.5,511.72 611.5,511.83 612.5,511.93 613.5,512.03 614.5,512.13 615.5,512.24 616.5,512.34 617.5,512.44 618.5,512.53 619.5,512.63 620.5,512.73 621.5,512.83 622.5,512.92 623.5,513.02 624.5,513.11 625.5,513.20 626.5,513.30 627.5,513.39 628.5,513.48 629.5,513.57 630.5,513.66 631.5,513.75 632.5,513.83 633.5,513.92 634.5,514.01 635.5,514.09 636.5,514.18 637.5,514.26 638.5,514.35 639.5,514.43 640.5,514.51 641.5,514.60 642.5,514.68 643.5,514.76 644.5,514.84 645.5,514.92 646.5,515.00 647.5,515.08 648.5,515.15 649.5,515.23 650.5,515.31 651.5,515.38 652.5,515.46 653.5,515.53 654.5,515.61 655.5,515.68 656.5,515.76 657.5,515.83 658.5,515.90 659.5,515.97 660.5,516.04 661.5,516.12 662.5,516.19 663.5,516.26 664.5,516.33 665.5,516.39 666.5,516.46 667.5,516.53 668.5,516.60 669.5,516.67 670.5,516.73 671.5,516.80 672.5,516.86 673.5,516.93 674.5,516.99 675.5,517.06 676.5,517.12 677.5,517.19 678.5,517.25 679.5,517.31 680.5,517.37 681.5,517.44 682.5,517.50 683.5,517.56 684.5,517.62 685.5,517.68 686.5,517.74 687.5,517.80 688.5,517.86 689.5,517.92 690.5,517.97 691.5,518.03 692.5,518.09 693.5,518.15 694.5,518.20 695.5,518.26 696.5,518.32 697.5,518.37 698.5,518.43 699.5,518.48 700.5,518.54 701.5,518.59 702.5,518.65 703.5,518.70 704.5,518.76 705.5,518.81 706.5,518.86 707.5,518.91 708.5,518.97 709.5,519.02 710.5,519.07 711.5,519.12 712.5,519.17 713.5,519.22 714.5,519.27 715.5,519.32 716.5,519.37 717.5,519.42 718.5,519.47 719.5,519.52 720.5,519.57 721.5,519.62 722.5,519.67 723.5,519.72 724.5,519.76 725.5,519.81 726.5,519.86 727.5,519.90 728.5,519.95 729.5,520.00 730.5,520.04 731.5,520.09 732.5,520.14 733.5,520.18 734.5,520.23 735.5,520.27 736.5,520.32 737.5,520.36 738.5,520.40 739.5,520.45 740.5,520.49 741.5,520.54 742.5,520.58 743.5,520.62 744.5,520.66 745.5,520.71 746.5,520.75 747.5,520.79 748.5,520.83 749.5,520.87 750.5,520.92 751.5,520.96 752.5,521.00 753.5,521.04" fill="none" stroke="#0000ff" stroke-width="1" shape-rendering="crispEdges"/><polyline points="27.5,538.50 28.5,538.50 29.5,538.49 30.5,538.47 31.5,538.45 32.5,538.43 33.5,538.40 34.5,538.36 35.5,538.31 36.5,538.27 37.5,538.21 38.5,538.15 39.5,538.08 40.5,538.01 41.5,537.93 42.5,537.85 43.5,537.76 44.5,537.66 45.5,537.56 46.5,537.45 47.5,537.34 48.5,537.22 49.5,537.09 50.5,536.96 51.5,536.82 52.5,536.67 53.5,536.52 54.5,536.37 55.5,536.20 56.5,536.03 57.5,535.86 58.5,535.67 59.5,535.49 60.5,535.29 61.5,535.09 62.5,534.88 63.5,534.66 64.5,534.44 65.5,534.21 66.5,533.98 67.5,533.74 68.5,533.49 69.5,533.23 70.5,532.97 71.5,532.70 72.5,532.42 73.5,532.14 74.5,531.85 75.5,531.55 76.5,531.24 77.5,530.93 78.5,530.61 79.5,530.28 80.5,529.94 81.5,529.60 82.5,529.25 83.5,528.89 84.5,528.52 85.5,528.14 86.5,527.76 87.5,527.37 88.5,526.97 89.5,526.56 90.5,526.14 91.5,525.71 92.5,525.27 93.5,524.83 94.5,524.38 95.5,523.91 96.5,523.44 97.5,522.96 98.5,522.47 99.5,521.97 100.5,521.45 101.5,520.93 102.5,520.40 103.5,519.86 104.5,519.31 105.5,518.75 106.5,518.17 107.5,517.59 108.5,517.00 109.5,516.39 110.5,515.77 111.5,515.14 112.5,514.50 113.5,513.85 114.5,513.19 115.5,512.51 116.5,511.82 117.5,511.12 118.5,510.40 119.5,509.68 120.5,508.94 121.5,508.18 122.5,507.41 123.5,506.63 124.5,505.83 125.5,505.02 126.5,504.20 127.5,503.36 128.5,502.50 129.5,501.63 130.5,500.75 131.5,499.84 132.5,498.92 133.5,497.99 134.5,497.04 135.5,496.07 136.5,495.08 137.5,494.08 138.5,493.06 139.5,492.02 140.5,490.96 141.5,489.88 142.5,488.78 143.5,487.66 144.5,486.53 145.5,485.37 146.5,484.19 147.5,482.99 148.5,481.77 149.5,480.52 150.5,479.26 151.5,477.97 152.5,476.66 153.5,475.32 154.5,473.96 155.5,472.57 156.5,471.16 157.5,469.73 158.5,468.27 159.5,466.78 160.5,465.26 161.5,463.72 162.5,462.15 163.5,460.55 164.5,458.92 165.5,457.26 166.5,455.57 167.5,453.84 168.5,452.09 169.5,450.31 170.5,448.49 171.5,446.64 172.5,444.75 173.5,442.83 174.5,440.88 175.5,438.89 176.5,436.86 177.5,434.79 178.5,432.69 179.5,430.55 180.5,428.37 181.5,426.15 182.5,423.88 183.5,421.58 184.5,419.23 185.5,416.85 186.5,414.41 187.5,411.94 188.5,409.41 189.5,406.85 190.5,404.23 191.5,401.57 192.5,398.86 193.5,396.11 194.5,393.30 195.5,390.44 196.5,387.54 197.5,384.58 198.5,381.57 199.5,378.51 200.5,375.39 201.5,372.23 202.5,369.01 203.5,365.73 204.5,362.40 205.5,359.02 206.5,355.58 207.5,352.09 208.5,348.54 209.5,344.94 210.5,341.28 211.5,337.57 212.5,333.80 213.5,329.98 214.5,326.10 215.5,322.17 216.5,318.19 217.5,314.16 218.5,310.08 219.5,305.95 220.5,301.77 221.5,297.54 222.5,293.27 223.5,288.96 224.5,284.60 225.5,280.21 226.5,275.78 227.5,271.32 228.5,266.82 229.5,262.30 230.5,257.76 231.5,253.19 232.5,248.60 233.5,244.01 234.5,239.40 235.5,234.79 236.5,230.17 237.5,225.56 238.5,220.96 239.5,216.38 240.5,211.81 241.5,207.27 242.5,202.76 243.5,198.29 244.5,193.86 245.5,189.47 246.5,185.14 247.5,180.87 248.5,176.66 249.5,172.52 250.5,168.46 251.5,164.48 252.5,160.58 253.5,156.78 254.5,153.07 255.5,149.47 256.5,145.97 257.5,142.57 258.5,139.29 259.5,136.13 260.5,133.09 261.5,130.16 262.5,127.37 263.5,124.69 264.5,122.15 265.5,119.73 266.5,117.44 267.5,115.28 268.5,113.25 269.5,111.35 270.5,109.58 271.5,107.93 272.5,106.41 273.5,105.01 274.5,103.73 275.5,102.57 276.5,101.53 277.5,100.59 278.5,99.77 279.5,99.06 280.5,98.44 281.5,97.93 282.5,97.52 283.5,97.19 284.5,96.95 285.5,96.80 286.5,96.73 287.5,96.74 288.5,96.82 289.5,96.97 290.5,97.18 291.5,97.46 292.5,97.79 293.5,98.19 294.5,98.63 295.5,99.12 296.5,99.65 297.5,100.23 298.5,100.84 299.5,101.49 300.5,102.18 301.5,102.89 302.5,103.63 303.5,104.39 304.5,105.18 305.5,105.99 306.5,106.81 307.5,107.65 308.5,108.51 309.5,109.38 310.5,110.25 311.5,111.14 312.5,112.03 313.5,112.92 314.5,113.82 315.5,114.73 316.5,115.63 317.5,116.53 318.5,117.44 319.5,118.34 320.5,119.23 321.5,120.12 322.5,121.01 323.5,121.89 324.5,122.77 325.5,123.63 326.5,124.49 327.5,125.34 328.5,126.18 329.5,127.02 330.5,127.84 331.5,128.65 332.5,129.45 333.5,130.23 334.5,131.01 335.5,131.77 336.5,132.53 337.5,133.26 338.5,133.99 339.5,134.70 340.5,135.40 341.5,136.09 342.5,136.76 343.5,137.42 344.5,138.07 345.5,138.70 346.5,139.31 347.5,139.92 348.5,140.51 349.5,141.08 350.5,141.64 351.5,142.19 352.5,142.72 353.5,143.24 354.5,143.74 355.5,144.23 356.5,144.71 357.5,145.17 358.5,145.62 359.5,146.05 360.5,146.47 361.5,146.87 362.5,147.27 363.5,147.64 364.5,148.01 365.5,148.36 366.5,148.69 367.5,149.01 368.5,149.32 369.5,149.62 370.5,149.90 371.5,150.17 372.5,150.43 373.5,150.67 374.5,150.90 375.5,151.11 376.5,151.32 377.5,151.51 378.5,151.69 379.5,151.85 380.5,152.01 381.5,152.15 382.5,152.27 383.5,152.39 384.5,152.49 385.5,152.59 386.5,152.67 387.5,152.73 388.5,152.79 389.5,152.83 390.5,152.87 391.5,152.89 392.5,152.90 393.5,152.90 394.5,152.89 395.5,152.86 396.5,152.83 397.5,152.78 398.5,152.73 399.5,152.66 400.5,152.58 401.5,152.49 402.5,152.39 403.5,152.28 404.5,152.16 405.5,152.03 406.5,151.89 407.5,151.74 408.5,151.58 409.5,151.42 410.5,151.24 411.5,151.05 412.5,150.85 413.5,150.64 414.5,150.42 415.5,150.20 416.5,149.96 417.5,149.71 418.5,149.46 419.5,149.20 420.5,148.93 421.5,148.64 422.5,148.36 423.5,148.06 424.5,147.75 425.5,147.44 426.5,147.11 427.5,146.78 428.5,146.45 429.5,146.10 430.5,145.74 431.5,145.38 432.5,145.01 433.5,144.63 434.5,144.25 435.5,143.86 436.5,143.46 437.5,143.05 438.5,142.64 439.5,142.22 440.5,141.79 441.5,141.36 442.5,140.92 443.5,140.47 444.5,140.02 445.5,139.56 446.5,139.09 447.5,138.62 448.5,138.15 449.5,137.66 450.5,137.18 451.5,136.68 452.5,136.18 453.5,135.68 454.5,135.17 455.5,134.66 456.5,134.14 457.5,133.62 458.5,133.09 459.5,132.56 460.5,132.03 461.5,131.49 462.5,130.95 463.5,130.40 464.5,129.85 465.5,129.30 466.5,128.75 467.5,128.19 468.5,127.63 469.5,127.06 470.5,126.50 471.5,125.93 472.5,125.36 473.5,124.79 474.5,124.22 475.5,123.65 476.5,123.07 477.5,122.50 478.5,121.92 479.5,121.34 480.5,120.77 481.5,120.19 482.5,119.62 483.5,119.04 484.5,118.47 485.5,117.89 486.5,117.32 487.5,116.75 488.5,116.18 489.5,115.62 490.5,115.05 491.5,114.49 492.5,113.93 493.5,113.38 494.5,112.82 495.5,112.28 496.5,111.73 497.5,111.19 498.5,110.66 499.5,110.13 500.5,109.60 501.5,109.09 502.5,108.57 503.5,108.07 504.5,107.57 505.5,107.07 506.5,106.59 507.5,106.11 508.5,105.64 509.5,105.17 510.5,104.72 511.5,104.28 512.5,103.84 513.5,103.41 514.5,103.00 515.5,102.59 516.5,102.19 517.5,101.81 518.5,101.44 519.5,101.07 520.5,100.72 521.5,100.39 522.5,100.06 523.5,99.75 524.5,99.45 525.5,99.16 526.5,98.89 527.5,98.64 528.5,98.39 529.5,98.17 530.5,97.95 531.5,97.76 532.5,97.58 533.5,97.41 534.5,97.27 535.5,97.14 536.5,97.02 537.5,96.93 538.5,96.85 539.5,96.79 540.5,96.75 541.5,96.73 542.5,96.73 543.5,96.74 544.5,96.78 545.5,96.83 546.5,96.91 547.5,97.01 548.5,97.12 549.5,97.26 550.5,97.42 551.5,97.59 552.5,97.79 553.5,98.02 554.5,98.26 555.5,98.52 556.5,98.81 557.5,99.12 558.5,99.45 559.5,99.80 560.5,100.18 561.5,100.58 562.5,101.00 563.5,101.44 564.5,101.91 565.5,102.40 566.5,102.91 567.5,103.44 568.5,104.00 569.5,104.58 570.5,105.18 571.5,105.80 572.5,106.45 573.5,107.12 574.5,107.81 575.5,108.53 576.5,109.26 577.5,110.02 578.5,110.80 579.5,111.60 580.5,112.42 581.5,113.27 582.5,114.13 583.5,115.02 584.5,115.93 585.5,116.86 586.5,117.81 587.5,118.78 588.5,119.77 589.5,120.77 590.5,121.80 591.5,122.85 592.5,123.91 593.5,125.00 594.5,126.10 595.5,127.22 596.5,128.36 597.5,129.52 598.5,130.69 599.5,131.88 600.5,133.08 601.5,134.30 602.5,135.54 603.5,136.79 604.5,138.06 605.5,139.34 606.5,140.63 607.5,141.94 608.5,143.27 609.5,144.60 610.5,145.95 611.5,147.31 612.5,148.68 613.5,150.06 614.5,151.46 615.5,152.86 616.5,154.28 617.5,155.70 618.5,157.14 619.5,158.58 620.5,160.03 621.5,161.50 622.5,162.96 623.5,164.44 624.5,165.92 625.5,167.41 626.5,168.91 627.5,170.42 628.5,171.92 629.5,173.44 630.5,174.96 631.5,176.48 632.5,178.01 633.5,179.54 634.5,181.08 635.5,182.62 636.5,184.16 637.5,185.71 638.5,187.26 639.5,188.81 640.5,190.36 641.5,191.91 642.5,193.46 643.5,195.02 644.5,196.58 645.5,198.13 646.5,199.69 647.5,201.25 648.5,202.80 649.5,204.36 650.5,205.91 651.5,207.46 652.5,209.02 653.5,210.57 654.5,212.11 655.5,213.66 656.5,215.20 657.5,216.74 658.5,218.28 659.5,219.82 660.5,221.35 661.5,222.88 662.5,224.40 663.5,225.93 664.5,227.44 665.5,228.96 666.5,230.47 667.5,231.97 668.5,233.48 669.5,234.97 670.5,236.46 671.5,237.95 672.5,239.43 673.5,240.91 674.5,242.38 675.5,243.85 676.5,245.31 677.5,246.77 678.5,248.22 679.5,249.66 680.5,251.10 681.5,252.53 682.5,253.96 683.5,255.38 684.5,256.79 685.5,258.20 686.5,259.60 687.5,261.00 688.5,262.39 689.5,263.77 690.5,265.14 691.5,266.51 692.5,267.87 693.5,269.23 694.5,270.58 695.5,271.92 696.5,273.26 697.5,274.59 698.5,275.91 699.5,277.22 700.5,278.53 701.5,279.83 702.5,281.13 703.5,282.41 704.5,283.69 705.5,284.97 706.5,286.23 707.5,287.49 708.5,288.74 709.5,289.99 710.5,291.23 711.5,292.46 712.5,293.68 713.5,294.90 714.5,296.11 715.5,297.31 716.5,298.51 717.5,299.69 718.5,300.88 719.5,302.05 720.5,303.22 721.5,304.38 722.5,305.53 723.5,306.68 724.5,307.82 725.5,308.95 726.5,310.08 727.5,311.19 728.5,312.31 729.5,313.41 730.5,314.51 731.5,315.60 732.5,316.69 733.5,317.76 734.5,318.83 735.5,319.90 736.5,320.96 737.5,322.01 738.5,323.05 739.5,324.09 740.5,325.12 741.5,326.15 742.5,327.17 743.5,328.18 744.5,329.18 745.5,330.18 746.5,331.17 747.5,332.16 748.5,333.14 749.5,334.11 750.5,335.08 751.5,336.04 752.5,337.00 753.5,337.95" fill="none" stroke="#008000" stroke-width="1" shape-rendering="crispEdges"/><rect x="27" y="265" width="727" height="1" fill="#ff00ff" shape-rendering="crispEdges"/><text x="13.6" y="578.6" font-size="13" font-weight="bold" stroke="#008000" stroke-width="0.3" font-style="italic" fill="#008000" textLength="94" lengthAdjust="spacingAndGlyphs">Wertebereich:</text><text x="12.5" y="600" font-size="13" font-weight="bold" stroke="#000080" stroke-width="0.3" font-style="italic" fill="#000080" textLength="34" lengthAdjust="spacingAndGlyphs">Ymin:</text><text x="117" y="600" font-size="13" font-weight="bold" stroke="#000080" stroke-width="0.3" font-style="italic" fill="#000080" textLength="39" lengthAdjust="spacingAndGlyphs">Ymax:</text><rect x="50.5" y="585.5" width="57" height="21" rx="2" fill="#f0f0f0" stroke="#fff" stroke-width="1"/><rect x="51" y="606" width="57" height="1" fill="#888" shape-rendering="crispEdges"/><rect x="166.5" y="585.5" width="57" height="21" rx="2" fill="#f0f0f0" stroke="#fff" stroke-width="1"/><rect x="167" y="606" width="57" height="1" fill="#888" shape-rendering="crispEdges"/><text x="52" y="600" font-size="13" font-weight="bold" stroke="#800000" stroke-width="0.3" fill="#800000">0</text><text x="168" y="600" font-size="13" font-weight="bold" stroke="#800000" stroke-width="0.3" fill="#800000" textLength="27.5" lengthAdjust="spacingAndGlyphs">1,25</text><rect x="242.5" y="577.5" width="12" height="12" rx="2" fill="#f0f0f0" stroke="#555" stroke-width="1"/><rect x="242.5" y="594.5" width="12" height="12" rx="2" fill="#f0f0f0" stroke="#555" stroke-width="1"/><text x="258" y="588" font-size="11" font-weight="bold" stroke="#000" stroke-width="0.3" fill="#000" textLength="68" lengthAdjust="spacingAndGlyphs">Maßstab 1:1</text><text x="258" y="605" font-size="11" font-weight="bold" stroke="#000" stroke-width="0.3" fill="#000" textLength="63" lengthAdjust="spacingAndGlyphs">Asymptote</text><rect x="335" y="571" width="5" height="37" fill="#fff" shape-rendering="crispEdges"/><rect x="336" y="572" width="3" height="35" fill="#000080" shape-rendering="crispEdges"/><rect x="337" y="573" width="1" height="33" fill="#ffff00" shape-rendering="crispEdges"/><rect x="411" y="571" width="5" height="37" fill="#fff" shape-rendering="crispEdges"/><rect x="412" y="572" width="3" height="35" fill="#000080" shape-rendering="crispEdges"/><rect x="413" y="573" width="1" height="33" fill="#ffff00" shape-rendering="crispEdges"/><rect x="658" y="571" width="5" height="37" fill="#fff" shape-rendering="crispEdges"/><rect x="659" y="572" width="3" height="35" fill="#000080" shape-rendering="crispEdges"/><rect x="660" y="573" width="1" height="33" fill="#ffff00" shape-rendering="crispEdges"/><rect x="347.5" y="576.5" width="32" height="26" rx="3" fill="#fdfdfd" stroke="#d4d4d4" stroke-width="1"/><rect x="387.5" y="583.5" width="20" height="19" rx="3" fill="#fdfdfd" stroke="#d4d4d4" stroke-width="1"/><rect x="421.5" y="576.5" width="31" height="26" rx="3" fill="#fdfdfd" stroke="#d4d4d4" stroke-width="1"/><rect x="668.5" y="576.5" width="62" height="26" rx="3" fill="#fdfdfd" stroke="#d4d4d4" stroke-width="1"/><rect x="740.5" y="576.5" width="25" height="26" rx="3" fill="#fdfdfd" stroke="#d4d4d4" stroke-width="1"/><rect x="743" y="579" width="20" height="21" fill="#dcdcdc" shape-rendering="crispEdges"/><circle cx="472.4" cy="582.3" r="7" fill="#ff0000" stroke="#000" stroke-width="1"/><circle cx="472.4" cy="599.6" r="7" fill="#0000ff" stroke="#000" stroke-width="1"/><circle cx="569.4" cy="582.4" r="7" fill="#008000" stroke="#000" stroke-width="1"/><circle cx="569.4" cy="599.6" r="7" fill="#ff00ff" stroke="#000" stroke-width="1"/><rect x="483" y="575" width="13" height="13" rx="2" fill="#0060b8"/><path d="M486.5 581.5 L488.5 583.5 L492.5 579" fill="none" stroke="#d8e8f8" stroke-width="1"/><rect x="483" y="593" width="13" height="13" rx="2" fill="#0060b8"/><path d="M486.5 599.5 L488.5 601.5 L492.5 597" fill="none" stroke="#d8e8f8" stroke-width="1"/><rect x="580" y="575" width="13" height="13" rx="2" fill="#0060b8"/><path d="M583.5 581.5 L585.5 583.5 L589.5 579" fill="none" stroke="#d8e8f8" stroke-width="1"/><rect x="580" y="593" width="13" height="13" rx="2" fill="#0060b8"/><path d="M583.5 599.5 L585.5 601.5 L589.5 597" fill="none" stroke="#d8e8f8" stroke-width="1"/><text x="499" y="587" font-size="11" font-weight="bold" stroke="#000" stroke-width="0.3" fill="#000" textLength="47" lengthAdjust="spacingAndGlyphs">Funkt.: 1</text><text x="499" y="604" font-size="11" font-weight="bold" stroke="#000" stroke-width="0.3" fill="#000" textLength="47" lengthAdjust="spacingAndGlyphs">Funkt.: 2</text><text x="596.5" y="587" font-size="11" font-weight="bold" stroke="#000" stroke-width="0.3" fill="#000" textLength="47" lengthAdjust="spacingAndGlyphs">Funkt.: 3</text><text x="596.5" y="604" font-size="11" font-weight="bold" stroke="#000" stroke-width="0.3" fill="#000" textLength="47" lengthAdjust="spacingAndGlyphs">Funkt.: 4</text><text x="673.5" y="594.5" font-size="12" font-weight="bold" stroke="#800000" stroke-width="0.3" fill="#800000" textLength="30" lengthAdjust="spacingAndGlyphs">Close</text><path d="M708 582 L724 589 L712 589 Z" fill="#0000ff"/><path d="M708 597 L724 589 L712 589 Z" fill="#000080"/><rect x="708" y="589" width="16" height="1" fill="#ff0000" shape-rendering="crispEdges"/><polygon points="743.00,580.00 751.60,580.00 751.00,581.00 746.00,582.10 745.10,583.00 744.00,588.00 743.00,588.60" fill="#000080"/><line x1="745.4" y1="582.4" x2="751.0" y2="588.0" stroke="#000080" stroke-width="2.2"/><polygon points="763.00,580.00 754.40,580.00 755.00,581.00 760.00,582.10 760.90,583.00 762.00,588.00 763.00,588.60" fill="#000080"/><line x1="760.6" y1="582.4" x2="755.0" y2="588.0" stroke="#000080" stroke-width="2.2"/><polygon points="743.00,600.00 751.60,600.00 751.00,599.00 746.00,597.90 745.10,597.00 744.00,592.00 743.00,591.40" fill="#000080"/><line x1="745.4" y1="597.6" x2="751.0" y2="592.0" stroke="#000080" stroke-width="2.2"/><polygon points="763.00,600.00 754.40,600.00 755.00,599.00 760.00,597.90 760.90,597.00 762.00,592.00 763.00,591.40" fill="#000080"/><line x1="760.6" y1="597.6" x2="755.0" y2="592.0" stroke="#000080" stroke-width="2.2"/><g shape-rendering="crispEdges"><rect x="359" y="582" width="7" height="1" fill="#000000"/><rect x="359" y="583" width="1" height="1" fill="#000000"/><rect x="360" y="583" width="5" height="1" fill="#ffffff"/><rect x="365" y="583" width="2" height="1" fill="#000000"/><rect x="359" y="584" width="1" height="1" fill="#000000"/><rect x="360" y="584" width="1" height="1" fill="#ffffff"/><rect x="361" y="584" width="1" height="1" fill="#000000"/><rect x="362" y="584" width="3" height="1" fill="#ffffff"/><rect x="365" y="584" width="1" height="1" fill="#000000"/><rect x="366" y="584" width="1" height="1" fill="#ffffff"/><rect x="367" y="584" width="1" height="1" fill="#000000"/><rect x="359" y="585" width="1" height="1" fill="#000000"/><rect x="360" y="585" width="5" height="1" fill="#ffffff"/><rect x="365" y="585" width="4" height="1" fill="#000000"/><rect x="359" y="586" width="1" height="1" fill="#000000"/><rect x="360" y="586" width="1" height="1" fill="#ffffff"/><rect x="361" y="586" width="2" height="1" fill="#000000"/><rect x="363" y="586" width="5" height="1" fill="#ffffff"/><rect x="368" y="586" width="1" height="1" fill="#000000"/><rect x="359" y="587" width="1" height="1" fill="#000000"/><rect x="360" y="587" width="8" height="1" fill="#ffffff"/><rect x="368" y="587" width="1" height="1" fill="#000000"/><rect x="359" y="588" width="1" height="1" fill="#000000"/><rect x="360" y="588" width="1" height="1" fill="#ffffff"/><rect x="361" y="588" width="4" height="1" fill="#000000"/><rect x="365" y="588" width="1" height="1" fill="#ffffff"/><rect x="366" y="588" width="1" height="1" fill="#000000"/><rect x="367" y="588" width="1" height="1" fill="#ffffff"/><rect x="368" y="588" width="1" height="1" fill="#000000"/><rect x="359" y="589" width="1" height="1" fill="#000000"/><rect x="360" y="589" width="8" height="1" fill="#ffffff"/><rect x="368" y="589" width="1" height="1" fill="#000000"/><rect x="356" y="590" width="16" height="1" fill="#000000"/><rect x="356" y="591" width="1" height="1" fill="#000000"/><rect x="357" y="591" width="2" height="1" fill="#ffffff"/><rect x="359" y="591" width="1" height="1" fill="#c0c0c0"/><rect x="360" y="591" width="2" height="1" fill="#ffffff"/><rect x="362" y="591" width="1" height="1" fill="#c0c0c0"/><rect x="363" y="591" width="2" height="1" fill="#ffffff"/><rect x="365" y="591" width="1" height="1" fill="#c0c0c0"/><rect x="366" y="591" width="2" height="1" fill="#ffffff"/><rect x="368" y="591" width="1" height="1" fill="#c0c0c0"/><rect x="369" y="591" width="2" height="1" fill="#ffffff"/><rect x="371" y="591" width="1" height="1" fill="#000000"/><rect x="356" y="592" width="1" height="1" fill="#000000"/><rect x="357" y="592" width="1" height="1" fill="#ffffff"/><rect x="358" y="592" width="1" height="1" fill="#c0c0c0"/><rect x="359" y="592" width="1" height="1" fill="#ffffff"/><rect x="360" y="592" width="2" height="1" fill="#c0c0c0"/><rect x="362" y="592" width="1" height="1" fill="#ffffff"/><rect x="363" y="592" width="2" height="1" fill="#c0c0c0"/><rect x="365" y="592" width="1" height="1" fill="#ffffff"/><rect x="366" y="592" width="2" height="1" fill="#c0c0c0"/><rect x="368" y="592" width="1" height="1" fill="#ffffff"/><rect x="369" y="592" width="1" height="1" fill="#ff0000"/><rect x="370" y="592" width="1" height="1" fill="#ffffff"/><rect x="371" y="592" width="1" height="1" fill="#000000"/><rect x="356" y="593" width="1" height="1" fill="#000000"/><rect x="357" y="593" width="2" height="1" fill="#ffffff"/><rect x="359" y="593" width="1" height="1" fill="#c0c0c0"/><rect x="360" y="593" width="2" height="1" fill="#ffffff"/><rect x="362" y="593" width="1" height="1" fill="#c0c0c0"/><rect x="363" y="593" width="2" height="1" fill="#ffffff"/><rect x="365" y="593" width="1" height="1" fill="#c0c0c0"/><rect x="366" y="593" width="2" height="1" fill="#ffffff"/><rect x="368" y="593" width="1" height="1" fill="#c0c0c0"/><rect x="369" y="593" width="2" height="1" fill="#ffffff"/><rect x="371" y="593" width="1" height="1" fill="#000000"/><rect x="356" y="594" width="16" height="1" fill="#000000"/><rect x="356" y="595" width="1" height="1" fill="#000000"/><rect x="357" y="595" width="14" height="1" fill="#e0e0e0"/><rect x="371" y="595" width="1" height="1" fill="#000000"/><rect x="356" y="596" width="1" height="1" fill="#000000"/><rect x="357" y="596" width="14" height="1" fill="#c0c0c0"/><rect x="371" y="596" width="1" height="1" fill="#000000"/><rect x="357" y="597" width="14" height="1" fill="#000000"/></g><g shape-rendering="crispEdges"><rect x="393" y="585" width="1" height="1" fill="#808000"/><rect x="396" y="585" width="3" height="1" fill="#000000"/><rect x="393" y="586" width="1" height="1" fill="#808000"/><rect x="394" y="586" width="6" height="1" fill="#000000"/><rect x="390" y="587" width="9" height="1" fill="#000000"/><rect x="399" y="587" width="1" height="1" fill="#ffffff"/><rect x="400" y="587" width="1" height="1" fill="#000000"/><rect x="390" y="588" width="1" height="1" fill="#000000"/><rect x="391" y="588" width="2" height="1" fill="#ffffff"/><rect x="393" y="588" width="4" height="1" fill="#000000"/><rect x="397" y="588" width="4" height="1" fill="#ffffff"/><rect x="401" y="588" width="1" height="1" fill="#000000"/><rect x="390" y="589" width="1" height="1" fill="#000000"/><rect x="391" y="589" width="3" height="1" fill="#ffffff"/><rect x="394" y="589" width="2" height="1" fill="#000000"/><rect x="396" y="589" width="2" height="1" fill="#808000"/><rect x="398" y="589" width="3" height="1" fill="#ffffff"/><rect x="401" y="589" width="1" height="1" fill="#000000"/><rect x="390" y="590" width="4" height="1" fill="#000000"/><rect x="394" y="590" width="1" height="1" fill="#ffffff"/><rect x="395" y="590" width="1" height="1" fill="#000000"/><rect x="396" y="590" width="3" height="1" fill="#808000"/><rect x="399" y="590" width="2" height="1" fill="#ffffff"/><rect x="401" y="590" width="1" height="1" fill="#000000"/><rect x="394" y="591" width="1" height="1" fill="#000000"/><rect x="395" y="591" width="2" height="1" fill="#ffffff"/><rect x="397" y="591" width="3" height="1" fill="#808000"/><rect x="400" y="591" width="1" height="1" fill="#ffffff"/><rect x="401" y="591" width="1" height="1" fill="#000000"/><rect x="394" y="592" width="1" height="1" fill="#000000"/><rect x="395" y="592" width="3" height="1" fill="#ffffff"/><rect x="398" y="592" width="3" height="1" fill="#808000"/><rect x="401" y="592" width="1" height="1" fill="#000000"/><rect x="390" y="593" width="9" height="1" fill="#000000"/><rect x="399" y="593" width="3" height="1" fill="#808000"/><rect x="402" y="593" width="4" height="1" fill="#000000"/><rect x="390" y="594" width="1" height="1" fill="#000000"/><rect x="391" y="594" width="2" height="1" fill="#ffffff"/><rect x="393" y="594" width="1" height="1" fill="#c0c0c0"/><rect x="394" y="594" width="2" height="1" fill="#ffffff"/><rect x="396" y="594" width="1" height="1" fill="#c0c0c0"/><rect x="397" y="594" width="2" height="1" fill="#ffffff"/><rect x="399" y="594" width="1" height="1" fill="#c0c0c0"/><rect x="400" y="594" width="3" height="1" fill="#808000"/><rect x="403" y="594" width="2" height="1" fill="#ffffff"/><rect x="405" y="594" width="1" height="1" fill="#000000"/><rect x="390" y="595" width="1" height="1" fill="#000000"/><rect x="391" y="595" width="1" height="1" fill="#ffffff"/><rect x="392" y="595" width="1" height="1" fill="#ff0000"/><rect x="393" y="595" width="1" height="1" fill="#ffffff"/><rect x="394" y="595" width="2" height="1" fill="#c0c0c0"/><rect x="396" y="595" width="1" height="1" fill="#ffffff"/><rect x="397" y="595" width="2" height="1" fill="#c0c0c0"/><rect x="399" y="595" width="1" height="1" fill="#ffffff"/><rect x="400" y="595" width="1" height="1" fill="#c0c0c0"/><rect x="401" y="595" width="3" height="1" fill="#808000"/><rect x="404" y="595" width="1" height="1" fill="#ffffff"/><rect x="405" y="595" width="1" height="1" fill="#000000"/><rect x="390" y="596" width="1" height="1" fill="#000000"/><rect x="391" y="596" width="2" height="1" fill="#ffffff"/><rect x="393" y="596" width="1" height="1" fill="#c0c0c0"/><rect x="394" y="596" width="2" height="1" fill="#ffffff"/><rect x="396" y="596" width="1" height="1" fill="#c0c0c0"/><rect x="397" y="596" width="2" height="1" fill="#ffffff"/><rect x="399" y="596" width="1" height="1" fill="#c0c0c0"/><rect x="400" y="596" width="2" height="1" fill="#ffffff"/><rect x="402" y="596" width="3" height="1" fill="#808000"/><rect x="405" y="596" width="1" height="1" fill="#000000"/><rect x="390" y="597" width="13" height="1" fill="#000000"/><rect x="403" y="597" width="3" height="1" fill="#808000"/><rect x="390" y="598" width="1" height="1" fill="#000000"/><rect x="391" y="598" width="12" height="1" fill="#e0e0e0"/><rect x="403" y="598" width="1" height="1" fill="#000000"/><rect x="404" y="598" width="2" height="1" fill="#808000"/><rect x="390" y="599" width="1" height="1" fill="#000000"/><rect x="391" y="599" width="13" height="1" fill="#c0c0c0"/><rect x="404" y="599" width="1" height="1" fill="#000000"/><rect x="405" y="599" width="1" height="1" fill="#808000"/><rect x="391" y="600" width="14" height="1" fill="#000000"/></g><g shape-rendering="crispEdges"><rect x="429" y="582" width="4" height="1" fill="#00ffff"/><rect x="433" y="582" width="9" height="1" fill="#000000"/><rect x="429" y="583" width="3" height="1" fill="#00ffff"/><rect x="432" y="583" width="1" height="1" fill="#000000"/><rect x="433" y="583" width="1" height="1" fill="#ffff00"/><rect x="434" y="583" width="2" height="1" fill="#000000"/><rect x="436" y="583" width="1" height="1" fill="#ffff00"/><rect x="437" y="583" width="4" height="1" fill="#ffffff"/><rect x="441" y="583" width="2" height="1" fill="#000000"/><rect x="429" y="584" width="2" height="1" fill="#00ffff"/><rect x="431" y="584" width="1" height="1" fill="#000000"/><rect x="432" y="584" width="1" height="1" fill="#ffff00"/><rect x="433" y="584" width="1" height="1" fill="#ffffff"/><rect x="434" y="584" width="1" height="1" fill="#ffff00"/><rect x="435" y="584" width="1" height="1" fill="#000000"/><rect x="436" y="584" width="1" height="1" fill="#ffff00"/><rect x="437" y="584" width="1" height="1" fill="#000000"/><rect x="438" y="584" width="3" height="1" fill="#ffffff"/><rect x="441" y="584" width="1" height="1" fill="#000000"/><rect x="442" y="584" width="1" height="1" fill="#ffffff"/><rect x="443" y="584" width="1" height="1" fill="#000000"/><rect x="429" y="585" width="1" height="1" fill="#00ffff"/><rect x="430" y="585" width="1" height="1" fill="#000000"/><rect x="431" y="585" width="1" height="1" fill="#ffff00"/><rect x="432" y="585" width="1" height="1" fill="#ffffff"/><rect x="433" y="585" width="1" height="1" fill="#ffff00"/><rect x="434" y="585" width="1" height="1" fill="#ffffff"/><rect x="435" y="585" width="1" height="1" fill="#ffff00"/><rect x="436" y="585" width="1" height="1" fill="#000000"/><rect x="437" y="585" width="1" height="1" fill="#ffff00"/><rect x="438" y="585" width="1" height="1" fill="#000000"/><rect x="439" y="585" width="2" height="1" fill="#ffffff"/><rect x="441" y="585" width="4" height="1" fill="#000000"/><rect x="429" y="586" width="1" height="1" fill="#000000"/><rect x="430" y="586" width="1" height="1" fill="#ffff00"/><rect x="431" y="586" width="1" height="1" fill="#ffffff"/><rect x="432" y="586" width="1" height="1" fill="#ffff00"/><rect x="433" y="586" width="1" height="1" fill="#ffffff"/><rect x="434" y="586" width="1" height="1" fill="#ffff00"/><rect x="435" y="586" width="1" height="1" fill="#ffffff"/><rect x="436" y="586" width="1" height="1" fill="#000000"/><rect x="437" y="586" width="2" height="1" fill="#ffff00"/><rect x="439" y="586" width="1" height="1" fill="#000000"/><rect x="440" y="586" width="4" height="1" fill="#ffffff"/><rect x="444" y="586" width="1" height="1" fill="#000000"/><rect x="430" y="587" width="1" height="1" fill="#000000"/><rect x="431" y="587" width="1" height="1" fill="#ffff00"/><rect x="432" y="587" width="1" height="1" fill="#ffffff"/><rect x="433" y="587" width="1" height="1" fill="#ffff00"/><rect x="434" y="587" width="1" height="1" fill="#ffffff"/><rect x="435" y="587" width="1" height="1" fill="#000000"/><rect x="436" y="587" width="1" height="1" fill="#ffff00"/><rect x="437" y="587" width="1" height="1" fill="#000000"/><rect x="438" y="587" width="2" height="1" fill="#ffff00"/><rect x="440" y="587" width="1" height="1" fill="#000000"/><rect x="441" y="587" width="3" height="1" fill="#ffffff"/><rect x="444" y="587" width="1" height="1" fill="#000000"/><rect x="430" y="588" width="1" height="1" fill="#000000"/><rect x="431" y="588" width="1" height="1" fill="#ffffff"/><rect x="432" y="588" width="1" height="1" fill="#ffff00"/><rect x="433" y="588" width="1" height="1" fill="#ffffff"/><rect x="434" y="588" width="1" height="1" fill="#ffff00"/><rect x="435" y="588" width="1" height="1" fill="#ffffff"/><rect x="436" y="588" width="1" height="1" fill="#000000"/><rect x="437" y="588" width="1" height="1" fill="#ffff00"/><rect x="438" y="588" width="1" height="1" fill="#000000"/><rect x="439" y="588" width="2" height="1" fill="#ffff00"/><rect x="441" y="588" width="1" height="1" fill="#000000"/><rect x="442" y="588" width="2" height="1" fill="#ffffff"/><rect x="444" y="588" width="1" height="1" fill="#000000"/><rect x="431" y="589" width="1" height="1" fill="#000000"/><rect x="432" y="589" width="1" height="1" fill="#ffff00"/><rect x="433" y="589" width="1" height="1" fill="#ffffff"/><rect x="434" y="589" width="1" height="1" fill="#ffff00"/><rect x="435" y="589" width="1" height="1" fill="#ffffff"/><rect x="436" y="589" width="1" height="1" fill="#ffff00"/><rect x="437" y="589" width="1" height="1" fill="#000000"/><rect x="438" y="589" width="3" height="1" fill="#ffff00"/><rect x="441" y="589" width="1" height="1" fill="#000000"/><rect x="442" y="589" width="1" height="1" fill="#ffffff"/><rect x="443" y="589" width="2" height="1" fill="#000000"/><rect x="431" y="590" width="2" height="1" fill="#000000"/><rect x="433" y="590" width="1" height="1" fill="#ffff00"/><rect x="434" y="590" width="1" height="1" fill="#ffffff"/><rect x="435" y="590" width="1" height="1" fill="#ffff00"/><rect x="436" y="590" width="1" height="1" fill="#000000"/><rect x="437" y="590" width="1" height="1" fill="#ffffff"/><rect x="438" y="590" width="1" height="1" fill="#000000"/><rect x="439" y="590" width="2" height="1" fill="#ffff00"/><rect x="441" y="590" width="1" height="1" fill="#000000"/><rect x="442" y="590" width="2" height="1" fill="#ffffff"/><rect x="444" y="590" width="1" height="1" fill="#000000"/><rect x="433" y="591" width="4" height="1" fill="#000000"/><rect x="437" y="591" width="2" height="1" fill="#ffffff"/><rect x="439" y="591" width="3" height="1" fill="#000000"/><rect x="442" y="591" width="1" height="1" fill="#ffffff"/><rect x="443" y="591" width="2" height="1" fill="#000000"/><rect x="433" y="592" width="1" height="1" fill="#000000"/><rect x="434" y="592" width="10" height="1" fill="#ffffff"/><rect x="444" y="592" width="1" height="1" fill="#000000"/><rect x="433" y="593" width="1" height="1" fill="#000000"/><rect x="434" y="593" width="1" height="1" fill="#ffffff"/><rect x="435" y="593" width="2" height="1" fill="#000000"/><rect x="437" y="593" width="1" height="1" fill="#ffffff"/><rect x="438" y="593" width="2" height="1" fill="#000000"/><rect x="440" y="593" width="1" height="1" fill="#ffffff"/><rect x="441" y="593" width="2" height="1" fill="#000000"/><rect x="443" y="593" width="1" height="1" fill="#ffffff"/><rect x="444" y="593" width="1" height="1" fill="#000000"/><rect x="433" y="594" width="1" height="1" fill="#000000"/><rect x="434" y="594" width="10" height="1" fill="#ffffff"/><rect x="444" y="594" width="1" height="1" fill="#000000"/><rect x="433" y="595" width="1" height="1" fill="#000000"/><rect x="434" y="595" width="1" height="1" fill="#ffffff"/><rect x="435" y="595" width="2" height="1" fill="#000000"/><rect x="437" y="595" width="2" height="1" fill="#ffffff"/><rect x="439" y="595" width="1" height="1" fill="#000000"/><rect x="440" y="595" width="1" height="1" fill="#ffffff"/><rect x="441" y="595" width="4" height="1" fill="#000000"/><rect x="433" y="596" width="1" height="1" fill="#000000"/><rect x="434" y="596" width="10" height="1" fill="#ffffff"/><rect x="444" y="596" width="1" height="1" fill="#000000"/><rect x="433" y="597" width="12" height="1" fill="#000000"/></g></svg></body></html>
